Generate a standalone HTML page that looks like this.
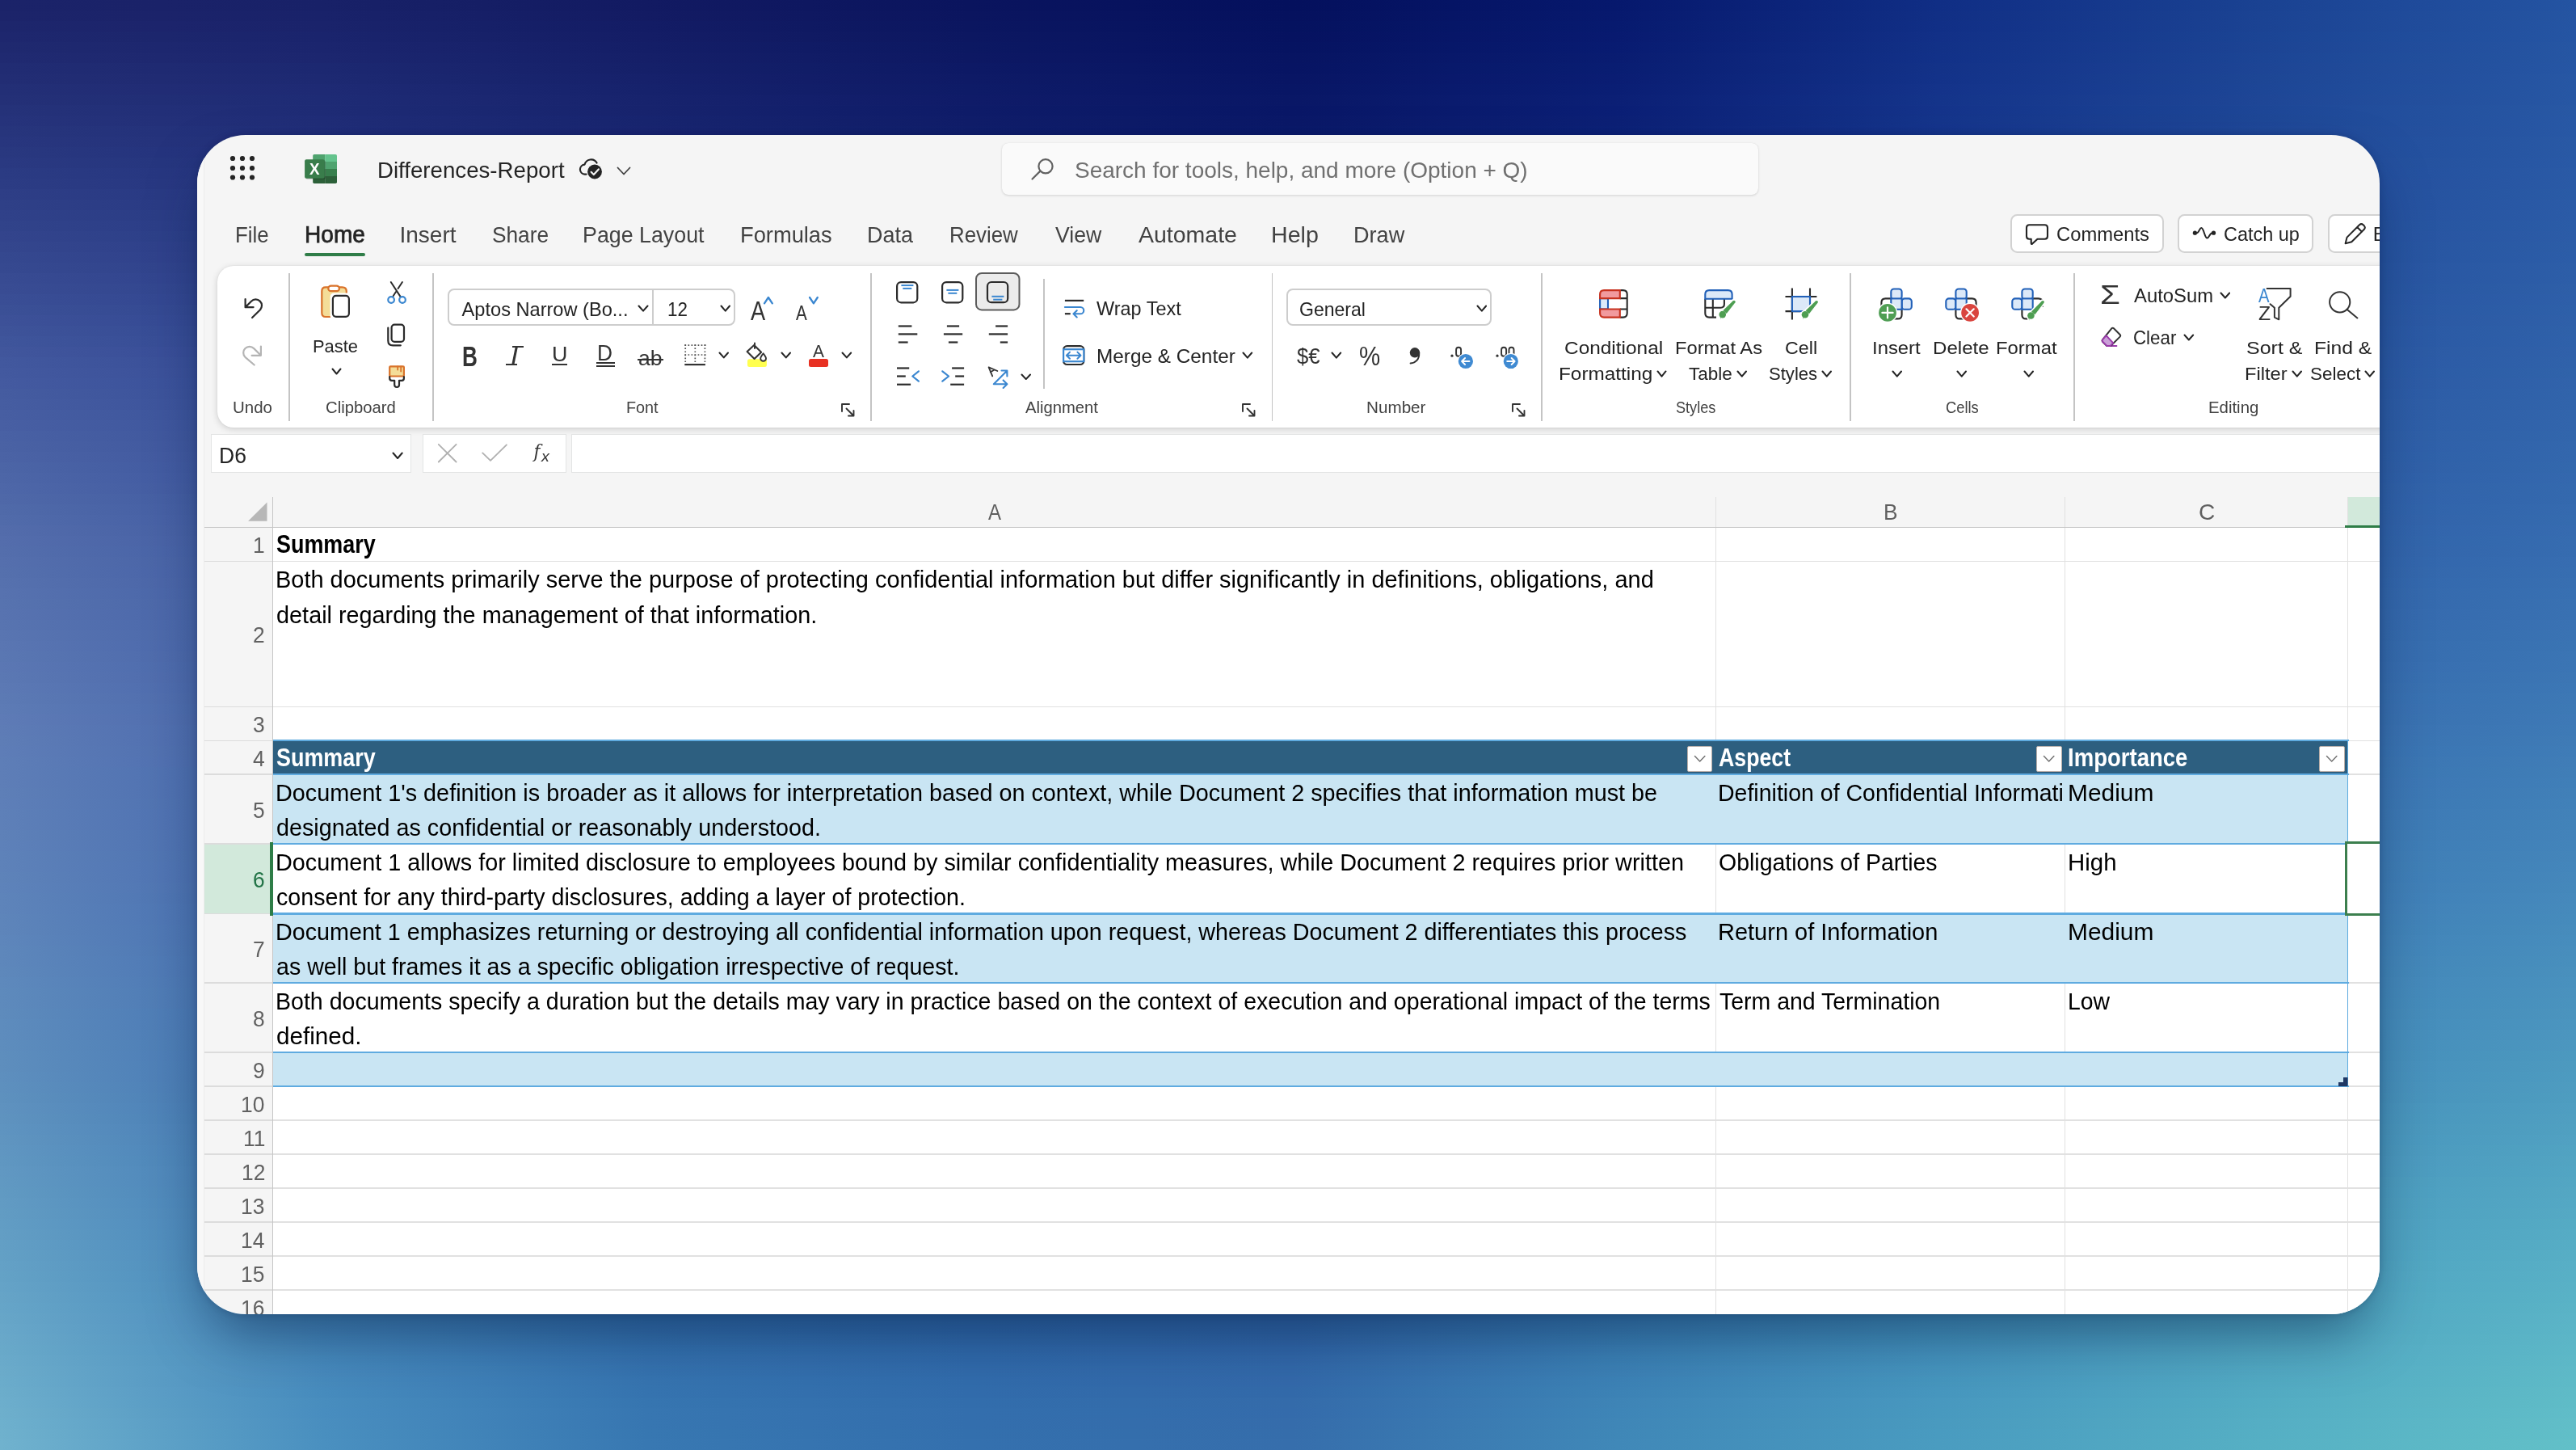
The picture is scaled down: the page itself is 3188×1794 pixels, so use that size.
<!DOCTYPE html>
<html><head><meta charset="utf-8"><title>Differences-Report</title>
<style>
html,body{margin:0;padding:0;}
body{width:3188px;height:1794px;overflow:hidden;position:relative;font-family:"Liberation Sans",sans-serif;background:#3a78b2;}
.a{position:absolute;box-sizing:border-box;}
.t{position:absolute;white-space:pre;line-height:1;transform-origin:0 0;}
#bg{position:absolute;left:0;top:0;width:3188px;height:1800px;background:#4a90c0;}
#w{position:absolute;left:244px;top:167px;width:2700.5px;height:1459px;border-radius:60px;background:#f5f5f5;overflow:hidden;}
#sh{position:absolute;left:244px;top:167px;width:2700.5px;height:1459px;border-radius:60px;box-shadow:0 34px 70px -14px rgba(0,24,60,0.50), 0 0 10px rgba(0,16,56,0.20);}
#c{position:absolute;left:-244px;top:-167px;width:3188px;height:1794px;will-change:transform;}
</style></head><body>
<div id="bg"><div style="height:13.000px;background:linear-gradient(90deg,#1b2369 0.00%,#1a2269 6.27%,#182168 12.55%,#151e65 18.82%,#121a62 25.09%,#0e1760 31.37%,#0a145e 37.64%,#07125e 43.91%,#04105d 50.19%,#051465 56.46%,#06186d 62.74%,#0b2379 69.01%,#102e85 75.28%,#15388c 81.56%,#1a4292 87.83%,#1f4b9b 94.10%,#2454a2 100.00%)"></div><div style="height:13.000px;background:linear-gradient(90deg,#1c246a 0.00%,#1b236a 6.27%,#19226a 12.55%,#161f67 18.82%,#131b63 25.09%,#0f1861 31.37%,#0b155f 37.64%,#08135f 43.91%,#05115e 50.19%,#061566 56.46%,#07196e 62.74%,#0c247a 69.01%,#112f85 75.28%,#16398c 81.56%,#1b4393 87.83%,#204c9b 94.10%,#2555a2 100.00%)"></div><div style="height:13.000px;background:linear-gradient(90deg,#1d266c 0.00%,#1c246c 6.27%,#1a236b 12.55%,#162068 18.82%,#131c65 25.09%,#0f1962 31.37%,#0b1660 37.64%,#081460 43.91%,#05125f 50.19%,#061667 56.46%,#071a6f 62.74%,#0c257a 69.01%,#112f86 75.28%,#16398d 81.56%,#1b4393 87.83%,#204c9b 94.10%,#2555a3 100.00%)"></div><div style="height:13.000px;background:linear-gradient(90deg,#1e276e 0.00%,#1c266d 6.27%,#1a246d 12.55%,#172169 18.82%,#141d66 25.09%,#101a63 31.37%,#0c1761 37.64%,#091561 43.91%,#061260 50.19%,#071668 56.46%,#081a70 62.74%,#0d257b 69.01%,#123087 75.28%,#163a8d 81.56%,#1b4494 87.83%,#204d9c 94.10%,#2555a3 100.00%)"></div><div style="height:13.000px;background:linear-gradient(90deg,#1f296f 0.00%,#1d276f 6.27%,#1b256e 12.55%,#18226b 18.82%,#141e67 25.09%,#101b65 31.37%,#0c1862 37.64%,#091562 43.91%,#061361 50.19%,#071769 56.46%,#081b71 62.74%,#0d267c 69.01%,#123187 75.28%,#173a8e 81.56%,#1c4494 87.83%,#214d9c 94.10%,#2656a3 100.00%)"></div><div style="height:13.000px;background:linear-gradient(90deg,#202a71 0.00%,#1e2870 6.27%,#1c266f 12.55%,#18236c 18.82%,#151f68 25.09%,#111c66 31.37%,#0d1863 37.64%,#0a1663 43.91%,#071462 50.19%,#08186a 56.46%,#091c71 62.74%,#0e277d 69.01%,#123188 75.28%,#173b8e 81.56%,#1c4595 87.83%,#214e9c 94.10%,#2656a3 100.00%)"></div><div style="height:13.000px;background:linear-gradient(90deg,#212c73 0.00%,#1f2a72 6.27%,#1c2871 12.55%,#19246d 18.82%,#152069 25.09%,#111d67 31.37%,#0d1965 37.64%,#0a1764 43.91%,#071463 50.19%,#08196b 56.46%,#091d72 62.74%,#0e277d 69.01%,#133288 75.28%,#183b8f 81.56%,#1d4595 87.83%,#224e9c 94.10%,#2656a4 100.00%)"></div><div style="height:13.000px;background:linear-gradient(90deg,#222d74 0.00%,#202b73 6.27%,#1d2972 12.55%,#19256e 18.82%,#16216b 25.09%,#121d68 31.37%,#0e1a66 37.64%,#0b1865 43.91%,#081564 50.19%,#09196c 56.46%,#0a1d73 62.74%,#0e287e 69.01%,#133289 75.28%,#183c8f 81.56%,#1d4695 87.83%,#224e9d 94.10%,#2757a4 100.00%)"></div><div style="height:13.000px;background:linear-gradient(90deg,#232f76 0.00%,#212c75 6.27%,#1e2a74 12.55%,#1a2670 18.82%,#16226c 25.09%,#121e69 31.37%,#0e1b67 37.64%,#0b1866 43.91%,#081665 50.19%,#091a6d 56.46%,#0a1e74 62.74%,#0f287f 69.01%,#14338a 75.28%,#183c90 81.56%,#1d4696 87.83%,#224f9d 94.10%,#2757a4 100.00%)"></div><div style="height:13.000px;background:linear-gradient(90deg,#243077 0.00%,#212e76 6.27%,#1e2b75 12.55%,#1b2771 18.82%,#17236d 25.09%,#131f6b 31.37%,#0f1b68 37.64%,#0c1967 43.91%,#091766 50.19%,#0a1b6e 56.46%,#0b1f75 62.74%,#0f2980 69.01%,#14348a 75.28%,#193d90 81.56%,#1e4696 87.83%,#234f9d 94.10%,#2757a4 100.00%)"></div><div style="height:13.000px;background:linear-gradient(90deg,#253279 0.00%,#222f78 6.27%,#1f2c76 12.55%,#1b2872 18.82%,#18246e 25.09%,#13206c 31.37%,#0f1c69 37.64%,#0c1a68 43.91%,#091767 50.19%,#0a1b6e 56.46%,#0b1f76 62.74%,#102a80 69.01%,#15348b 75.28%,#193e91 81.56%,#1e4797 87.83%,#23509e 94.10%,#2858a4 100.00%)"></div><div style="height:13.000px;background:linear-gradient(90deg,#26337b 0.00%,#233079 6.27%,#202d78 12.55%,#1c2974 18.82%,#182570 25.09%,#14216d 31.37%,#101d6a 37.64%,#0d1b69 43.91%,#0a1868 50.19%,#0b1c6f 56.46%,#0c2076 62.74%,#102a81 69.01%,#15358c 75.28%,#1a3e91 81.56%,#1e4797 87.83%,#23509e 94.10%,#2858a5 100.00%)"></div><div style="height:13.000px;background:linear-gradient(90deg,#27357c 0.00%,#24327b 6.27%,#202e79 12.55%,#1c2a75 18.82%,#192571 25.09%,#14226e 31.37%,#101e6b 37.64%,#0d1b6a 43.91%,#0a1969 50.19%,#0b1d70 56.46%,#0c2177 62.74%,#112b82 69.01%,#15358c 75.28%,#1a3f92 81.56%,#1f4898 87.83%,#24509e 94.10%,#2858a5 100.00%)"></div><div style="height:13.000px;background:linear-gradient(90deg,#28367e 0.00%,#25337c 6.27%,#21307b 12.55%,#1d2b76 18.82%,#192672 25.09%,#15236f 31.37%,#111f6c 37.64%,#0e1c6b 43.91%,#0b196a 50.19%,#0c1d71 56.46%,#0d2278 62.74%,#112c82 69.01%,#16368d 75.28%,#1b3f92 81.56%,#1f4898 87.83%,#24519f 94.10%,#2959a5 100.00%)"></div><div style="height:13.000px;background:linear-gradient(90deg,#29387f 0.00%,#25347e 6.27%,#22317c 12.55%,#1e2c78 18.82%,#1a2773 25.09%,#152370 31.37%,#111f6d 37.64%,#0e1d6c 43.91%,#0b1a6b 50.19%,#0c1e72 56.46%,#0d2279 62.74%,#122c83 69.01%,#16368d 75.28%,#1b4093 81.56%,#204998 87.83%,#24519f 94.10%,#2959a5 100.00%)"></div><div style="height:13.000px;background:linear-gradient(90deg,#2a3981 0.00%,#26367f 6.27%,#22327d 12.55%,#1e2d79 18.82%,#1a2875 25.09%,#162472 31.37%,#12206f 37.64%,#0f1d6d 43.91%,#0c1b6c 50.19%,#0d1f73 56.46%,#0e237a 62.74%,#122d84 69.01%,#17378e 75.28%,#1b4093 81.56%,#204999 87.83%,#25529f 94.10%,#2959a6 100.00%)"></div><div style="height:13.000px;background:linear-gradient(90deg,#2b3b83 0.00%,#273781 6.27%,#23337f 12.55%,#1f2e7a 18.82%,#1b2976 25.09%,#162573 31.37%,#122170 37.64%,#0f1e6e 43.91%,#0c1b6d 50.19%,#0d2074 56.46%,#0e247b 62.74%,#132e85 69.01%,#17388f 75.28%,#1c4194 81.56%,#204a99 87.83%,#2552a0 94.10%,#2a5aa6 100.00%)"></div><div style="height:13.000px;background:linear-gradient(90deg,#2c3c84 0.00%,#283882 6.27%,#243480 12.55%,#1f2f7c 18.82%,#1b2a77 25.09%,#172674 31.37%,#132271 37.64%,#101f70 43.91%,#0d1c6e 50.19%,#0e2075 56.46%,#0f247c 62.74%,#132e85 69.01%,#18388f 75.28%,#1c4194 81.56%,#214a9a 87.83%,#2652a0 94.10%,#2a5aa6 100.00%)"></div><div style="height:13.000px;background:linear-gradient(90deg,#2e3e86 0.00%,#293a84 6.27%,#253682 12.55%,#20307d 18.82%,#1c2b78 25.09%,#182775 31.37%,#132372 37.64%,#102071 43.91%,#0d1d6f 50.19%,#0e2176 56.46%,#0f257c 62.74%,#142f86 69.01%,#183990 75.28%,#1d4295 81.56%,#214b9a 87.83%,#2653a0 94.10%,#2a5ba6 100.00%)"></div><div style="height:13.000px;background:linear-gradient(90deg,#2f4087 0.00%,#2a3b85 6.27%,#263783 12.55%,#21317e 18.82%,#1d2c79 25.09%,#182876 31.37%,#142473 37.64%,#112171 43.91%,#0e1e70 50.19%,#0f2277 56.46%,#10267d 62.74%,#143087 69.01%,#193a90 75.28%,#1d4395 81.56%,#224b9b 87.83%,#2653a1 94.10%,#2b5ba7 100.00%)"></div><div style="height:13.000px;background:linear-gradient(90deg,#304189 0.00%,#2b3d86 6.27%,#273884 12.55%,#22337f 18.82%,#1d2d7a 25.09%,#192977 31.37%,#152574 37.64%,#122272 43.91%,#0f1f71 50.19%,#102377 56.46%,#10277e 62.74%,#153187 69.01%,#193a91 75.28%,#1e4396 81.56%,#224c9b 87.83%,#2754a1 94.10%,#2b5ba7 100.00%)"></div><div style="height:13.000px;background:linear-gradient(90deg,#31438a 0.00%,#2c3e88 6.27%,#273985 12.55%,#233481 18.82%,#1e2e7c 25.09%,#1a2a78 31.37%,#152575 37.64%,#122273 43.91%,#0f1f72 50.19%,#102478 56.46%,#11287f 62.74%,#153188 69.01%,#1a3b92 75.28%,#1e4496 81.56%,#234d9b 87.83%,#2755a1 94.10%,#2b5ca7 100.00%)"></div><div style="height:13.000px;background:linear-gradient(90deg,#33448c 0.00%,#2d4089 6.27%,#283b87 12.55%,#243582 18.82%,#1f2f7d 25.09%,#1a2b79 31.37%,#162676 37.64%,#132374 43.91%,#102073 50.19%,#112479 56.46%,#122980 62.74%,#163289 69.01%,#1a3c92 75.28%,#1f4497 81.56%,#234d9c 87.83%,#2855a2 94.10%,#2c5ca7 100.00%)"></div><div style="height:13.000px;background:linear-gradient(90deg,#34468d 0.00%,#2f418b 6.27%,#293c88 12.55%,#243683 18.82%,#20307e 25.09%,#1b2c7a 31.37%,#172777 37.64%,#142475 43.91%,#102174 50.19%,#11257a 56.46%,#122980 62.74%,#16338a 69.01%,#1b3c93 75.28%,#1f4598 81.56%,#234e9c 87.83%,#2856a2 94.10%,#2c5da7 100.00%)"></div><div style="height:13.000px;background:linear-gradient(90deg,#35488f 0.00%,#30428c 6.27%,#2a3d89 12.55%,#253784 18.82%,#20317f 25.09%,#1c2d7c 31.37%,#172878 37.64%,#142576 43.91%,#112275 50.19%,#12267b 56.46%,#132a81 62.74%,#17348a 69.01%,#1b3d93 75.28%,#1f4698 81.56%,#244e9d 87.83%,#2856a2 94.10%,#2c5da8 100.00%)"></div><div style="height:13.000px;background:linear-gradient(90deg,#364990 0.00%,#31448d 6.27%,#2b3e8b 12.55%,#263885 18.82%,#213280 25.09%,#1d2e7d 31.37%,#182979 37.64%,#152677 43.91%,#122376 50.19%,#13277c 56.46%,#132b82 62.74%,#18348b 69.01%,#1c3e94 75.28%,#204699 81.56%,#244f9d 87.83%,#2957a3 94.10%,#2d5ea8 100.00%)"></div><div style="height:13.000px;background:linear-gradient(90deg,#384b92 0.00%,#32458f 6.27%,#2c408c 12.55%,#273a87 18.82%,#223381 25.09%,#1d2f7e 31.37%,#192a7a 37.64%,#162778 43.91%,#122377 50.19%,#13287d 56.46%,#142c83 62.74%,#18358c 69.01%,#1c3e95 75.28%,#204799 81.56%,#25509d 87.83%,#2957a3 94.10%,#2d5ea8 100.00%)"></div><div style="height:13.000px;background:linear-gradient(90deg,#394c93 0.00%,#334790 6.27%,#2d418d 12.55%,#283b88 18.82%,#233482 25.09%,#1e307f 31.37%,#192b7b 37.64%,#162879 43.91%,#132478 50.19%,#14287e 56.46%,#152d84 62.74%,#19368c 69.01%,#1d3f95 75.28%,#21489a 81.56%,#25509e 87.83%,#2958a3 94.10%,#2e5fa8 100.00%)"></div><div style="height:13.000px;background:linear-gradient(90deg,#3a4e95 0.00%,#344892 6.27%,#2e428f 12.55%,#293c89 18.82%,#233584 25.09%,#1f3180 31.37%,#1a2c7c 37.64%,#17287a 43.91%,#142579 50.19%,#14297e 56.46%,#152e84 62.74%,#19378d 69.01%,#1d4096 75.28%,#21489a 81.56%,#25519e 87.83%,#2a58a4 94.10%,#2e5fa9 100.00%)"></div><div style="height:13.000px;background:linear-gradient(90deg,#3b5096 0.00%,#354a93 6.27%,#2f4490 12.55%,#293d8a 18.82%,#243685 25.09%,#1f3281 31.37%,#1b2d7d 37.64%,#18297b 43.91%,#142679 50.19%,#152a7f 56.46%,#162e85 62.74%,#1a378e 69.01%,#1e4196 75.28%,#22499b 81.56%,#26519f 87.83%,#2a59a4 94.10%,#2e60a9 100.00%)"></div><div style="height:13.000px;background:linear-gradient(90deg,#3d5198 0.00%,#364b95 6.27%,#304591 12.55%,#2a3e8c 18.82%,#253786 25.09%,#203382 31.37%,#1b2e7e 37.64%,#182a7c 43.91%,#15277a 50.19%,#162b80 56.46%,#162f86 62.74%,#1a388e 69.01%,#1e4197 75.28%,#224a9b 81.56%,#26529f 87.83%,#2b59a4 94.10%,#2f60a9 100.00%)"></div><div style="height:13.000px;background:linear-gradient(90deg,#3e5399 0.00%,#374d96 6.27%,#314692 12.55%,#2b3f8d 18.82%,#263887 25.09%,#213383 31.37%,#1c2e7f 37.64%,#192b7d 43.91%,#16277b 50.19%,#162c81 56.46%,#173087 62.74%,#1b398f 69.01%,#1f4297 75.28%,#234a9c 81.56%,#2752a0 87.83%,#2b5aa5 94.10%,#2f61a9 100.00%)"></div><div style="height:13.000px;background:linear-gradient(90deg,#3f559b 0.00%,#384e97 6.27%,#324794 12.55%,#2c408e 18.82%,#263a88 25.09%,#223484 31.37%,#1d2f80 37.64%,#1a2c7e 43.91%,#16287c 50.19%,#172d82 56.46%,#183188 62.74%,#1b3a90 69.01%,#1f4398 75.28%,#234b9c 81.56%,#2753a0 87.83%,#2b5aa5 94.10%,#2f61aa 100.00%)"></div><div style="height:13.000px;background:linear-gradient(90deg,#41569c 0.00%,#3a4f99 6.27%,#334995 12.55%,#2d428f 18.82%,#273b89 25.09%,#223585 31.37%,#1d3081 37.64%,#1a2d7f 43.91%,#17297d 50.19%,#182d83 56.46%,#183288 62.74%,#1c3b90 69.01%,#204399 75.28%,#244b9d 81.56%,#2854a0 87.83%,#2c5ba5 94.10%,#3061aa 100.00%)"></div><div style="height:13.000px;background:linear-gradient(90deg,#42589e 0.00%,#3b519a 6.27%,#334a96 12.55%,#2e4390 18.82%,#283c8a 25.09%,#233686 31.37%,#1e3183 37.64%,#1b2e80 43.91%,#172a7e 50.19%,#182e84 56.46%,#193289 62.74%,#1d3b91 69.01%,#204499 75.28%,#244c9d 81.56%,#2854a1 87.83%,#2c5ba6 94.10%,#3062aa 100.00%)"></div><div style="height:13.000px;background:linear-gradient(90deg,#43599f 0.00%,#3c529b 6.27%,#344b97 12.55%,#2e4491 18.82%,#283c8b 25.09%,#243787 31.37%,#1f3283 37.64%,#1b2e81 43.91%,#182b7f 50.19%,#192f84 56.46%,#19338a 62.74%,#1d3c92 69.01%,#21459a 75.28%,#254d9d 81.56%,#2855a1 87.83%,#2c5ca6 94.10%,#3063aa 100.00%)"></div><div style="height:13.000px;background:linear-gradient(90deg,#445aa0 0.00%,#3c539c 6.27%,#354c98 12.55%,#2f4592 18.82%,#293d8c 25.09%,#243888 31.37%,#1f3384 37.64%,#1c2f82 43.91%,#192b7f 50.19%,#193085 56.46%,#1a348a 62.74%,#1d3d92 69.01%,#21459a 75.28%,#254d9e 81.56%,#2955a2 87.83%,#2d5ca6 94.10%,#3163ab 100.00%)"></div><div style="height:13.000px;background:linear-gradient(90deg,#455ca0 0.00%,#3d549c 6.27%,#364d99 12.55%,#304593 18.82%,#2a3e8c 25.09%,#253989 31.37%,#203385 37.64%,#1c3082 43.91%,#192c80 50.19%,#1a3086 56.46%,#1a358b 62.74%,#1e3d93 69.01%,#22469b 75.28%,#254e9e 81.56%,#2956a2 87.83%,#2d5da7 94.10%,#3164ab 100.00%)"></div><div style="height:13.000px;background:linear-gradient(90deg,#465da1 0.00%,#3e559d 6.27%,#364e99 12.55%,#304693 18.82%,#2a3f8d 25.09%,#253989 31.37%,#203485 37.64%,#1d3083 43.91%,#1a2d81 50.19%,#1a3186 56.46%,#1b368c 62.74%,#1e3e93 69.01%,#22479b 75.28%,#264f9f 81.56%,#2a57a3 87.83%,#2e5ea7 94.10%,#3164ab 100.00%)"></div><div style="height:13.000px;background:linear-gradient(90deg,#475ea2 0.00%,#3f579e 6.27%,#374f9a 12.55%,#314794 18.82%,#2b408e 25.09%,#263a8a 31.37%,#213586 37.64%,#1d3184 43.91%,#1a2d81 50.19%,#1b3287 56.46%,#1b368c 62.74%,#1f3f94 69.01%,#22489c 75.28%,#264f9f 81.56%,#2a57a3 87.83%,#2e5ea7 94.10%,#3265ac 100.00%)"></div><div style="height:13.000px;background:linear-gradient(90deg,#485fa3 0.00%,#40589f 6.27%,#38509b 12.55%,#324895 18.82%,#2b408e 25.09%,#263b8a 31.37%,#213687 37.64%,#1e3284 43.91%,#1b2e82 50.19%,#1b3387 56.46%,#1c378d 62.74%,#1f4095 69.01%,#23489c 75.28%,#2750a0 81.56%,#2a58a3 87.83%,#2e5fa8 94.10%,#3265ac 100.00%)"></div><div style="height:13.000px;background:linear-gradient(90deg,#4961a4 0.00%,#41599f 6.27%,#39519b 12.55%,#324995 18.82%,#2c418f 25.09%,#273c8b 31.37%,#223687 37.64%,#1f3385 43.91%,#1b2f83 50.19%,#1c3388 56.46%,#1c388d 62.74%,#204095 69.01%,#23499d 75.28%,#2751a0 81.56%,#2b59a4 87.83%,#2f60a8 94.10%,#3266ac 100.00%)"></div><div style="height:13.000px;background:linear-gradient(90deg,#4a62a4 0.00%,#425aa0 6.27%,#39529c 12.55%,#334a96 18.82%,#2c4290 25.09%,#273d8c 31.37%,#223788 37.64%,#1f3386 43.91%,#1c2f83 50.19%,#1c3489 56.46%,#1d398e 62.74%,#204196 69.01%,#244a9d 75.28%,#2752a1 81.56%,#2b59a4 87.83%,#2f60a9 94.10%,#3367ad 100.00%)"></div><div style="height:13.000px;background:linear-gradient(90deg,#4b63a5 0.00%,#435ba1 6.27%,#3a539d 12.55%,#334b97 18.82%,#2d4390 25.09%,#283d8c 31.37%,#233888 37.64%,#203486 43.91%,#1c3084 50.19%,#1d3589 56.46%,#1d398f 62.74%,#214296 69.01%,#244a9e 75.28%,#2852a1 81.56%,#2c5aa5 87.83%,#2f61a9 94.10%,#3367ad 100.00%)"></div><div style="height:13.000px;background:linear-gradient(90deg,#4c65a6 0.00%,#435ca2 6.27%,#3b549e 12.55%,#344c97 18.82%,#2d4491 25.09%,#283e8d 31.37%,#233989 37.64%,#203587 43.91%,#1d3185 50.19%,#1d358a 56.46%,#1e3a8f 62.74%,#214397 69.01%,#254b9e 75.28%,#2853a2 81.56%,#2c5ba5 87.83%,#3061a9 94.10%,#3368ad 100.00%)"></div><div style="height:13.000px;background:linear-gradient(90deg,#4d66a7 0.00%,#445da3 6.27%,#3b559e 12.55%,#354d98 18.82%,#2e4492 25.09%,#293f8e 31.37%,#24398a 37.64%,#213587 43.91%,#1d3185 50.19%,#1e368b 56.46%,#1f3b90 62.74%,#224397 69.01%,#254c9f 75.28%,#2954a2 81.56%,#2c5ba6 87.83%,#3062aa 94.10%,#3468ae 100.00%)"></div><div style="height:13.000px;background:linear-gradient(90deg,#4e67a8 0.00%,#455ea3 6.27%,#3c569f 12.55%,#354d99 18.82%,#2f4592 25.09%,#2a408e 31.37%,#253a8a 37.64%,#213688 43.91%,#1e3286 50.19%,#1e378b 56.46%,#1f3c91 62.74%,#224498 69.01%,#264c9f 75.28%,#2954a3 81.56%,#2d5ca6 87.83%,#3163aa 94.10%,#3469ae 100.00%)"></div><div style="height:13.000px;background:linear-gradient(90deg,#4f68a8 0.00%,#4660a4 6.27%,#3d57a0 12.55%,#364e99 18.82%,#2f4693 25.09%,#2a408f 31.37%,#253b8b 37.64%,#223789 43.91%,#1e3386 50.19%,#1f388c 56.46%,#203c91 62.74%,#234598 69.01%,#264da0 75.28%,#2a55a3 81.56%,#2d5da6 87.83%,#3163ab 94.10%,#3469ae 100.00%)"></div><div style="height:13.000px;background:linear-gradient(90deg,#506aa9 0.00%,#4761a5 6.27%,#3e58a0 12.55%,#374f9a 18.82%,#304794 25.09%,#2b4190 31.37%,#263b8c 37.64%,#223789 43.91%,#1f3487 50.19%,#1f388c 56.46%,#203d92 62.74%,#234699 69.01%,#264ea0 75.28%,#2a56a4 81.56%,#2e5da7 87.83%,#3164ab 94.10%,#356aaf 100.00%)"></div><div style="height:13.000px;background:linear-gradient(90deg,#516baa 0.00%,#4862a6 6.27%,#3e59a1 12.55%,#37509b 18.82%,#304894 25.09%,#2b4290 31.37%,#263c8c 37.64%,#23388a 43.91%,#1f3488 50.19%,#20398d 56.46%,#213e92 62.74%,#24469a 69.01%,#274fa1 75.28%,#2a56a4 81.56%,#2e5ea7 87.83%,#3264ab 94.10%,#356baf 100.00%)"></div><div style="height:13.000px;background:linear-gradient(90deg,#536cab 0.00%,#4963a6 6.27%,#3f5aa2 12.55%,#38519b 18.82%,#314895 25.09%,#2c4391 31.37%,#273d8d 37.64%,#23398b 43.91%,#203588 50.19%,#203a8e 56.46%,#213f93 62.74%,#24479a 69.01%,#274fa1 75.28%,#2b57a4 81.56%,#2e5fa8 87.83%,#3265ac 94.10%,#366bb0 100.00%)"></div><div style="height:13.000px;background:linear-gradient(90deg,#546dac 0.00%,#4a64a7 6.27%,#405ba3 12.55%,#39529c 18.82%,#314996 25.09%,#2c4392 31.37%,#273e8e 37.64%,#243a8b 43.91%,#203689 50.19%,#213b8e 56.46%,#224094 62.74%,#25489b 69.01%,#2850a2 75.28%,#2b58a5 81.56%,#2f5fa8 87.83%,#3266ac 94.10%,#366cb0 100.00%)"></div><div style="height:13.000px;background:linear-gradient(90deg,#546eac 0.00%,#4a65a8 6.27%,#405ba3 12.55%,#39539d 18.82%,#324a96 25.09%,#2d4492 31.37%,#283e8e 37.64%,#243a8c 43.91%,#21368a 50.19%,#213b8f 56.46%,#224094 62.74%,#25489b 69.01%,#2851a2 75.28%,#2c58a5 81.56%,#2f60a9 87.83%,#3366ac 94.10%,#366cb0 100.00%)"></div><div style="height:13.000px;background:linear-gradient(90deg,#556fad 0.00%,#4b66a8 6.27%,#415ca4 12.55%,#39539d 18.82%,#324a97 25.09%,#2d4593 31.37%,#283f8f 37.64%,#253b8c 43.91%,#21378a 50.19%,#223c8f 56.46%,#224195 62.74%,#26499c 69.01%,#2951a3 75.28%,#2c59a6 81.56%,#3061a9 87.83%,#3367ad 94.10%,#376db1 100.00%)"></div><div style="height:13.000px;background:linear-gradient(90deg,#5570ad 0.00%,#4b66a9 6.27%,#415da4 12.55%,#3a549e 18.82%,#324b97 25.09%,#2d4593 31.37%,#283f8f 37.64%,#253b8d 43.91%,#22378b 50.19%,#223d90 56.46%,#234295 62.74%,#264a9c 69.01%,#2952a3 75.28%,#2d5aa6 81.56%,#3061a9 87.83%,#3468ad 94.10%,#376eb1 100.00%)"></div><div style="height:13.000px;background:linear-gradient(90deg,#5671ae 0.00%,#4c67a9 6.27%,#415da5 12.55%,#3a549e 18.82%,#334b98 25.09%,#2e4694 31.37%,#284090 37.64%,#253c8e 43.91%,#22388b 50.19%,#233d91 56.46%,#234296 62.74%,#264b9d 69.01%,#2a53a4 75.28%,#2d5ba7 81.56%,#3162aa 87.83%,#3469ae 94.10%,#386fb1 100.00%)"></div><div style="height:13.000px;background:linear-gradient(90deg,#5772af 0.00%,#4c68aa 6.27%,#425ea5 12.55%,#3a559f 18.82%,#334c98 25.09%,#2e4694 31.37%,#294090 37.64%,#253c8e 43.91%,#22398c 50.19%,#233e91 56.46%,#244396 62.74%,#274b9d 69.01%,#2a54a4 75.28%,#2d5ba7 81.56%,#3163aa 87.83%,#356aae 94.10%,#3870b2 100.00%)"></div><div style="height:13.000px;background:linear-gradient(90deg,#5773af 0.00%,#4d69aa 6.27%,#425fa6 12.55%,#3a559f 18.82%,#334c99 25.09%,#2e4795 31.37%,#294191 37.64%,#263d8f 43.91%,#23398c 50.19%,#233f92 56.46%,#244497 62.74%,#274c9e 69.01%,#2a54a4 75.28%,#2e5ca8 81.56%,#3164ab 87.83%,#356aae 94.10%,#3971b2 100.00%)"></div><div style="height:13.000px;background:linear-gradient(90deg,#5873b0 0.00%,#4d69ab 6.27%,#425fa6 12.55%,#3b56a0 18.82%,#334d99 25.09%,#2e4795 31.37%,#294191 37.64%,#263e8f 43.91%,#233a8d 50.19%,#243f92 56.46%,#254597 62.74%,#284d9e 69.01%,#2b55a5 75.28%,#2e5da8 81.56%,#3265ab 87.83%,#366baf 94.10%,#3971b2 100.00%)"></div><div style="height:13.000px;background:linear-gradient(90deg,#5874b0 0.00%,#4d6aac 6.27%,#4360a7 12.55%,#3b57a0 18.82%,#344d9a 25.09%,#2f4896 31.37%,#2a4292 37.64%,#263e90 43.91%,#233a8d 50.19%,#244093 56.46%,#254598 62.74%,#284e9f 69.01%,#2b56a5 75.28%,#2f5ea8 81.56%,#3265ab 87.83%,#366caf 94.10%,#3a72b3 100.00%)"></div><div style="height:13.000px;background:linear-gradient(90deg,#5975b1 0.00%,#4e6bac 6.27%,#4360a7 12.55%,#3b57a1 18.82%,#344e9a 25.09%,#2f4896 31.37%,#2a4392 37.64%,#273f90 43.91%,#243b8e 50.19%,#244193 56.46%,#254698 62.74%,#284e9f 69.01%,#2c57a6 75.28%,#2f5ea9 81.56%,#3366ac 87.83%,#366daf 94.10%,#3a73b3 100.00%)"></div><div style="height:13.000px;background:linear-gradient(90deg,#5a76b2 0.00%,#4e6bad 6.27%,#4361a8 12.55%,#3c58a1 18.82%,#344e9b 25.09%,#2f4997 31.37%,#2a4393 37.64%,#273f91 43.91%,#243b8e 50.19%,#254194 56.46%,#264799 62.74%,#294fa0 69.01%,#2c58a6 75.28%,#305fa9 81.56%,#3367ac 87.83%,#376eb0 94.10%,#3a74b3 100.00%)"></div><div style="height:13.000px;background:linear-gradient(90deg,#5a77b2 0.00%,#4f6cad 6.27%,#4462a8 12.55%,#3c58a2 18.82%,#344f9b 25.09%,#2f4997 31.37%,#2a4493 37.64%,#274091 43.91%,#243c8f 50.19%,#254294 56.46%,#26489a 62.74%,#2950a0 69.01%,#2c58a7 75.28%,#3060aa 81.56%,#3468ad 87.83%,#376eb0 94.10%,#3b75b4 100.00%)"></div><div style="height:13.000px;background:linear-gradient(90deg,#5b77b3 0.00%,#4f6dae 6.27%,#4462a9 12.55%,#3c59a2 18.82%,#354f9b 25.09%,#304a98 31.37%,#2b4494 37.64%,#284092 43.91%,#253d8f 50.19%,#264295 56.46%,#27489a 62.74%,#2a51a1 69.01%,#2d59a7 75.28%,#3061aa 81.56%,#3469ad 87.83%,#386fb1 94.10%,#3b75b4 100.00%)"></div><div style="height:13.000px;background:linear-gradient(90deg,#5b78b3 0.00%,#506dae 6.27%,#4463a9 12.55%,#3d59a3 18.82%,#35509c 25.09%,#304a98 31.37%,#2b4594 37.64%,#284192 43.91%,#253d90 50.19%,#264395 56.46%,#27499b 62.74%,#2a51a1 69.01%,#2d5aa8 75.28%,#3162aa 81.56%,#3469ad 87.83%,#3870b1 94.10%,#3c76b4 100.00%)"></div><div style="height:13.000px;background:linear-gradient(90deg,#5c79b4 0.00%,#506eaf 6.27%,#4563aa 12.55%,#3d5aa3 18.82%,#35509c 25.09%,#304b99 31.37%,#2b4595 37.64%,#284193 43.91%,#253e90 50.19%,#264496 56.46%,#274a9b 62.74%,#2b52a2 69.01%,#2e5ba8 75.28%,#3162ab 81.56%,#356aae 87.83%,#3971b1 94.10%,#3c77b5 100.00%)"></div><div style="height:13.000px;background:linear-gradient(90deg,#5c7ab4 0.00%,#516faf 6.27%,#4564aa 12.55%,#3d5ba4 18.82%,#35519d 25.09%,#304b99 31.37%,#2c4695 37.64%,#294293 43.91%,#263e91 50.19%,#274496 56.46%,#284b9c 62.74%,#2b53a2 69.01%,#2e5ba8 75.28%,#3263ab 81.56%,#356bae 87.83%,#3972b2 94.10%,#3d78b5 100.00%)"></div><div style="height:13.000px;background:linear-gradient(90deg,#5d7bb5 0.00%,#5170b0 6.27%,#4565ab 12.55%,#3d5ba4 18.82%,#36529d 25.09%,#314c9a 31.37%,#2c4696 37.64%,#294394 43.91%,#263f92 50.19%,#274597 56.46%,#284b9c 62.74%,#2b54a3 69.01%,#2f5ca9 75.28%,#3264ac 81.56%,#366caf 87.83%,#3a72b2 94.10%,#3d79b5 100.00%)"></div><div style="height:13.000px;background:linear-gradient(90deg,#5e7bb6 0.00%,#5270b0 6.27%,#4665ab 12.55%,#3e5ca5 18.82%,#36529e 25.09%,#314c9a 31.37%,#2c4796 37.64%,#294394 43.91%,#263f92 50.19%,#284697 56.46%,#294c9d 62.74%,#2c54a3 69.01%,#2f5da9 75.28%,#3365ac 81.56%,#366daf 87.83%,#3a73b2 94.10%,#3e79b6 100.00%)"></div><div style="height:13.000px;background:linear-gradient(90deg,#5e7cb6 0.00%,#5271b1 6.27%,#4666ac 12.55%,#3e5ca5 18.82%,#36529e 25.09%,#314d9b 31.37%,#2c4797 37.64%,#294495 43.91%,#274093 50.19%,#284698 56.46%,#294d9d 62.74%,#2c55a3 69.01%,#2f5eaa 75.28%,#3365ad 81.56%,#376daf 87.83%,#3b74b3 94.10%,#3e7ab6 100.00%)"></div><div style="height:13.000px;background:linear-gradient(90deg,#5e7db6 0.00%,#5271b1 6.27%,#4666ac 12.55%,#3e5ca5 18.82%,#36539e 25.09%,#314d9b 31.37%,#2c4897 37.64%,#294495 43.91%,#274093 50.19%,#284798 56.46%,#294e9e 62.74%,#2c56a4 69.01%,#305eaa 75.28%,#3366ad 81.56%,#376eb0 87.83%,#3b75b3 94.10%,#3f7bb6 100.00%)"></div><div style="height:13.000px;background:linear-gradient(90deg,#5e7db7 0.00%,#5272b1 6.27%,#4566ac 12.55%,#3d5da5 18.82%,#36539f 25.09%,#314d9b 31.37%,#2c4898 37.64%,#294495 43.91%,#274193 50.19%,#284899 56.46%,#294e9e 62.74%,#2d57a4 69.01%,#305faa 75.28%,#3467ad 81.56%,#376fb0 87.83%,#3b76b4 94.10%,#3f7cb7 100.00%)"></div><div style="height:13.000px;background:linear-gradient(90deg,#5e7eb7 0.00%,#5272b2 6.27%,#4567ac 12.55%,#3d5da6 18.82%,#35539f 25.09%,#314e9b 31.37%,#2c4898 37.64%,#294596 43.91%,#274194 50.19%,#284899 56.46%,#2a4f9e 62.74%,#2d57a5 69.01%,#3060ab 75.28%,#3468ae 81.56%,#3870b0 87.83%,#3c77b4 94.10%,#407db7 100.00%)"></div><div style="height:13.000px;background:linear-gradient(90deg,#5e7eb7 0.00%,#5173b2 6.27%,#4567ac 12.55%,#3d5da6 18.82%,#35549f 25.09%,#314e9c 31.37%,#2c4998 37.64%,#294596 43.91%,#274294 50.19%,#284999 56.46%,#2a509f 62.74%,#2d58a5 69.01%,#3061ab 75.28%,#3469ae 81.56%,#3871b1 87.83%,#3c78b4 94.10%,#407eb7 100.00%)"></div><div style="height:13.000px;background:linear-gradient(90deg,#5e7eb7 0.00%,#5173b2 6.27%,#4567ad 12.55%,#3d5ea6 18.82%,#35549f 25.09%,#314e9c 31.37%,#2c4998 37.64%,#294696 43.91%,#274294 50.19%,#29499a 56.46%,#2a509f 62.74%,#2d59a5 69.01%,#3161ac 75.28%,#356aae 81.56%,#3972b1 87.83%,#3d78b5 94.10%,#407fb8 100.00%)"></div><div style="height:13.000px;background:linear-gradient(90deg,#5e7fb7 0.00%,#5173b2 6.27%,#4568ad 12.55%,#3d5ea6 18.82%,#3554a0 25.09%,#304f9c 31.37%,#2c4999 37.64%,#294697 43.91%,#274395 50.19%,#294a9a 56.46%,#2a51a0 62.74%,#2e5aa6 69.01%,#3162ac 75.28%,#356aaf 81.56%,#3972b2 87.83%,#3d79b5 94.10%,#4180b8 100.00%)"></div><div style="height:13.000px;background:linear-gradient(90deg,#5e7fb8 0.00%,#5174b2 6.27%,#4468ad 12.55%,#3d5ea6 18.82%,#3554a0 25.09%,#304f9c 31.37%,#2c4a99 37.64%,#294697 43.91%,#274395 50.19%,#294a9b 56.46%,#2a52a0 62.74%,#2e5aa6 69.01%,#3163ac 75.28%,#356baf 81.56%,#3973b2 87.83%,#3d7ab5 94.10%,#4181b9 100.00%)"></div><div style="height:13.000px;background:linear-gradient(90deg,#5e80b8 0.00%,#5174b3 6.27%,#4468ad 12.55%,#3c5fa7 18.82%,#3555a0 25.09%,#304f9d 31.37%,#2c4a99 37.64%,#294797 43.91%,#274495 50.19%,#294b9b 56.46%,#2b52a0 62.74%,#2e5ba7 69.01%,#3264ad 75.28%,#366caf 81.56%,#3a74b2 87.83%,#3e7bb6 94.10%,#4282b9 100.00%)"></div><div style="height:13.000px;background:linear-gradient(90deg,#5e80b8 0.00%,#5174b3 6.27%,#4469ad 12.55%,#3c5fa7 18.82%,#3455a0 25.09%,#30509d 31.37%,#2c4a9a 37.64%,#294798 43.91%,#274496 50.19%,#294c9b 56.46%,#2b53a1 62.74%,#2e5ca7 69.01%,#3264ad 75.28%,#366db0 81.56%,#3a75b3 87.83%,#3e7cb6 94.10%,#4283b9 100.00%)"></div><div style="height:13.000px;background:linear-gradient(90deg,#5e81b8 0.00%,#5175b3 6.27%,#4469ae 12.55%,#3c5fa7 18.82%,#3455a0 25.09%,#30509d 31.37%,#2c4b9a 37.64%,#294898 43.91%,#274596 50.19%,#294c9c 56.46%,#2b54a1 62.74%,#2f5ca7 69.01%,#3265ad 75.28%,#366eb0 81.56%,#3a76b3 87.83%,#3f7db6 94.10%,#4383ba 100.00%)"></div><div style="height:13.000px;background:linear-gradient(90deg,#5e81b9 0.00%,#5175b3 6.27%,#4469ae 12.55%,#3c5fa7 18.82%,#3456a1 25.09%,#30509d 31.37%,#2b4b9a 37.64%,#294898 43.91%,#274596 50.19%,#294d9c 56.46%,#2b54a2 62.74%,#2f5da8 69.01%,#3266ae 75.28%,#376eb1 81.56%,#3b77b3 87.83%,#3f7eb7 94.10%,#4384ba 100.00%)"></div><div style="height:13.000px;background:linear-gradient(90deg,#5e82b9 0.00%,#5176b3 6.27%,#446aae 12.55%,#3c60a8 18.82%,#3456a1 25.09%,#30519e 31.37%,#2b4c9a 37.64%,#294999 43.91%,#274697 50.19%,#294d9c 56.46%,#2b55a2 62.74%,#2f5ea8 69.01%,#3367ae 75.28%,#376fb1 81.56%,#3b78b4 87.83%,#407fb7 94.10%,#4485ba 100.00%)"></div><div style="height:13.000px;background:linear-gradient(90deg,#5e82b9 0.00%,#5176b4 6.27%,#436aae 12.55%,#3c60a8 18.82%,#3456a1 25.09%,#2f519e 31.37%,#2b4c9b 37.64%,#294999 43.91%,#274697 50.19%,#2a4e9d 56.46%,#2c56a2 62.74%,#2f5fa8 69.01%,#3367ae 75.28%,#3770b1 81.56%,#3c78b4 87.83%,#4080b7 94.10%,#4486bb 100.00%)"></div><div style="height:13.000px;background:linear-gradient(90deg,#5e83b9 0.00%,#5176b4 6.27%,#436aaf 12.55%,#3b60a8 18.82%,#3356a1 25.09%,#2f519e 31.37%,#2b4c9b 37.64%,#294999 43.91%,#284698 50.19%,#2a4e9d 56.46%,#2c56a3 62.74%,#305fa9 69.01%,#3368af 75.28%,#3871b2 81.56%,#3c79b4 87.83%,#4080b8 94.10%,#4587bb 100.00%)"></div><div style="height:13.000px;background:linear-gradient(90deg,#5e83ba 0.00%,#5177b4 6.27%,#436baf 12.55%,#3b61a8 18.82%,#3357a2 25.09%,#2f529e 31.37%,#2b4d9b 37.64%,#294a9a 43.91%,#284798 50.19%,#2a4f9e 56.46%,#2c57a3 62.74%,#3060a9 69.01%,#3469af 75.28%,#3872b2 81.56%,#3c7ab5 87.83%,#4181b8 94.10%,#4588bb 100.00%)"></div><div style="height:13.000px;background:linear-gradient(90deg,#5e84ba 0.00%,#5077b4 6.27%,#436baf 12.55%,#3b61a8 18.82%,#3357a2 25.09%,#2f529f 31.37%,#2b4d9c 37.64%,#294a9a 43.91%,#284798 50.19%,#2a509e 56.46%,#2c58a4 62.74%,#3061aa 69.01%,#346ab0 75.28%,#3872b2 81.56%,#3d7bb5 87.83%,#4182b9 94.10%,#4689bc 100.00%)"></div><div style="height:13.000px;background:linear-gradient(90deg,#5e84ba 0.00%,#5078b5 6.27%,#436baf 12.55%,#3b61a9 18.82%,#3357a2 25.09%,#2f529f 31.37%,#2b4d9c 37.64%,#294b9a 43.91%,#284899 50.19%,#2a509e 56.46%,#2c58a4 62.74%,#3061aa 69.01%,#346bb0 75.28%,#3973b3 81.56%,#3d7cb6 87.83%,#4283b9 94.10%,#468abc 100.00%)"></div><div style="height:13.000px;background:linear-gradient(90deg,#5e85ba 0.00%,#5078b5 6.27%,#436caf 12.55%,#3b62a9 18.82%,#3358a2 25.09%,#2f539f 31.37%,#2b4e9c 37.64%,#294b9b 43.91%,#284999 50.19%,#2a519f 56.46%,#2d59a4 62.74%,#3062aa 69.01%,#346bb0 75.28%,#3974b3 81.56%,#3d7db6 87.83%,#4284b9 94.10%,#468bbc 100.00%)"></div><div style="height:13.000px;background:linear-gradient(90deg,#5e85ba 0.00%,#5079b5 6.27%,#426cb0 12.55%,#3a62a9 18.82%,#3358a2 25.09%,#2f539f 31.37%,#2b4e9c 37.64%,#294c9b 43.91%,#284999 50.19%,#2a529f 56.46%,#2d5aa5 62.74%,#3163ab 69.01%,#356cb0 75.28%,#3975b3 81.56%,#3e7eb6 87.83%,#4285b9 94.10%,#478cbc 100.00%)"></div><div style="height:13.000px;background:linear-gradient(90deg,#5e86bb 0.00%,#5079b5 6.27%,#426db0 12.55%,#3a63a9 18.82%,#3259a3 25.09%,#2f54a0 31.37%,#2b4f9d 37.64%,#294c9b 43.91%,#284a99 50.19%,#2a529f 56.46%,#2d5ba5 62.74%,#3164ab 69.01%,#356db1 75.28%,#3a76b4 81.56%,#3e7fb6 87.83%,#4386ba 94.10%,#478dbd 100.00%)"></div><div style="height:13.000px;background:linear-gradient(90deg,#5e87bb 0.00%,#507ab5 6.27%,#426db0 12.55%,#3a63a9 18.82%,#3259a3 25.09%,#2e54a0 31.37%,#2b4f9d 37.64%,#294d9b 43.91%,#284a9a 50.19%,#2b53a0 56.46%,#2d5ca5 62.74%,#3165ab 69.01%,#356eb1 75.28%,#3a77b4 81.56%,#3e80b7 87.83%,#4387ba 94.10%,#488ebd 100.00%)"></div><div style="height:13.000px;background:linear-gradient(90deg,#5e87bb 0.00%,#507bb6 6.27%,#426eb0 12.55%,#3a64aa 18.82%,#325aa3 25.09%,#2e55a0 31.37%,#2b509d 37.64%,#294e9c 43.91%,#284b9a 50.19%,#2b54a0 56.46%,#2d5da6 62.74%,#3166ab 69.01%,#356fb1 75.28%,#3a78b4 81.56%,#3f81b7 87.83%,#4488ba 94.10%,#488fbd 100.00%)"></div><div style="height:13.000px;background:linear-gradient(90deg,#5e88bb 0.00%,#507bb6 6.27%,#426eb0 12.55%,#3a64aa 18.82%,#325aa3 25.09%,#2e55a0 31.37%,#2b519d 37.64%,#294e9c 43.91%,#284c9a 50.19%,#2b55a0 56.46%,#2e5ea6 62.74%,#3267ac 69.01%,#3670b2 75.28%,#3a79b4 81.56%,#3f82b7 87.83%,#4489ba 94.10%,#4990bd 100.00%)"></div><div style="height:13.000px;background:linear-gradient(90deg,#5e89bc 0.00%,#507cb6 6.27%,#426fb0 12.55%,#3a65aa 18.82%,#325ba3 25.09%,#2e56a1 31.37%,#2b519e 37.64%,#294f9c 43.91%,#284c9b 50.19%,#2b55a0 56.46%,#2e5ea6 62.74%,#3268ac 69.01%,#3671b2 75.28%,#3b7ab5 81.56%,#4083b7 87.83%,#458abb 94.10%,#4991be 100.00%)"></div><div style="height:13.000px;background:linear-gradient(90deg,#5e8abc 0.00%,#507db6 6.27%,#4170b1 12.55%,#3965aa 18.82%,#315ba4 25.09%,#2e56a1 31.37%,#2a529e 37.64%,#294f9c 43.91%,#284d9b 50.19%,#2b56a1 56.46%,#2e5fa7 62.74%,#3268ac 69.01%,#3672b2 75.28%,#3b7bb5 81.56%,#4084b8 87.83%,#458bbb 94.10%,#4a92be 100.00%)"></div><div style="height:13.000px;background:linear-gradient(90deg,#5e8abc 0.00%,#507db6 6.27%,#4170b1 12.55%,#3966aa 18.82%,#315ca4 25.09%,#2e57a1 31.37%,#2a529e 37.64%,#29509d 43.91%,#284e9b 50.19%,#2b57a1 56.46%,#2e60a7 62.74%,#3269ad 69.01%,#3773b2 75.28%,#3b7cb5 81.56%,#4085b8 87.83%,#458cbb 94.10%,#4a93be 100.00%)"></div><div style="height:13.000px;background:linear-gradient(90deg,#5e8bbc 0.00%,#4f7eb7 6.27%,#4171b1 12.55%,#3966aa 18.82%,#315ca4 25.09%,#2e57a1 31.37%,#2a539e 37.64%,#29509d 43.91%,#284e9c 50.19%,#2b58a1 56.46%,#2e61a7 62.74%,#336aad 69.01%,#3774b3 75.28%,#3c7db5 81.56%,#4186b8 87.83%,#468dbb 94.10%,#4b94be 100.00%)"></div><div style="height:13.000px;background:linear-gradient(90deg,#5e8cbd 0.00%,#4f7eb7 6.27%,#4171b1 12.55%,#3967ab 18.82%,#315da4 25.09%,#2e58a1 31.37%,#2a539f 37.64%,#29519d 43.91%,#284f9c 50.19%,#2c58a2 56.46%,#2f62a8 62.74%,#336bad 69.01%,#3774b3 75.28%,#3c7eb6 81.56%,#4187b8 87.83%,#468ebc 94.10%,#4b95bf 100.00%)"></div><div style="height:13.000px;background:linear-gradient(90deg,#5e8cbd 0.00%,#4f7fb7 6.27%,#4172b1 12.55%,#3967ab 18.82%,#315da4 25.09%,#2d58a2 31.37%,#2a549f 37.64%,#29529e 43.91%,#284f9c 50.19%,#2c59a2 56.46%,#2f63a8 62.74%,#336cae 69.01%,#3775b3 75.28%,#3c7eb6 81.56%,#4188b9 87.83%,#478fbc 94.10%,#4c96bf 100.00%)"></div><div style="height:13.000px;background:linear-gradient(90deg,#5e8dbd 0.00%,#4f80b7 6.27%,#4072b2 12.55%,#3868ab 18.82%,#305ea5 25.09%,#2d59a2 31.37%,#2a549f 37.64%,#29529e 43.91%,#29509c 50.19%,#2c5aa2 56.46%,#2f63a8 62.74%,#336dae 69.01%,#3876b3 75.28%,#3d7fb6 81.56%,#4289b9 87.83%,#4790bc 94.10%,#4c97bf 100.00%)"></div><div style="height:13.000px;background:linear-gradient(90deg,#5e8ebd 0.00%,#4f80b8 6.27%,#4073b2 12.55%,#3868ab 18.82%,#305ea5 25.09%,#2d59a2 31.37%,#2a559f 37.64%,#29539e 43.91%,#29519d 50.19%,#2c5ba3 56.46%,#2f64a9 62.74%,#346eae 69.01%,#3877b4 75.28%,#3d80b6 81.56%,#428ab9 87.83%,#4791bc 94.10%,#4c99bf 100.00%)"></div><div style="height:13.000px;background:linear-gradient(90deg,#5e8ebd 0.00%,#4f81b8 6.27%,#4073b2 12.55%,#3869ab 18.82%,#305fa5 25.09%,#2d5aa2 31.37%,#2a55a0 37.64%,#29539e 43.91%,#29519d 50.19%,#2c5ba3 56.46%,#2f65a9 62.74%,#346fae 69.01%,#3878b4 75.28%,#3d81b7 81.56%,#438bb9 87.83%,#4892bd 94.10%,#4d9abf 100.00%)"></div><div style="height:13.000px;background:linear-gradient(90deg,#5e8fbe 0.00%,#4f81b8 6.27%,#4074b2 12.55%,#3869ac 18.82%,#305fa5 25.09%,#2d5ba3 31.37%,#2a56a0 37.64%,#29549f 43.91%,#29529d 50.19%,#2c5ca3 56.46%,#3066a9 62.74%,#346faf 69.01%,#3979b4 75.28%,#3e82b7 81.56%,#438cba 87.83%,#4893bd 94.10%,#4d9bc0 100.00%)"></div><div style="height:13.000px;background:linear-gradient(90deg,#5e90be 0.00%,#4f82b8 6.27%,#4074b2 12.55%,#386aac 18.82%,#305fa5 25.09%,#2d5ba3 31.37%,#2a57a0 37.64%,#29559f 43.91%,#29539e 50.19%,#2c5da4 56.46%,#3067aa 62.74%,#3470af 69.01%,#397ab5 75.28%,#3e83b7 81.56%,#438cba 87.83%,#4994bd 94.10%,#4e9cc0 100.00%)"></div><div style="height:13.000px;background:linear-gradient(90deg,#5e91be 0.00%,#4f83b8 6.27%,#4075b3 12.55%,#386bac 18.82%,#3060a6 25.09%,#2d5ca3 31.37%,#2a57a1 37.64%,#29559f 43.91%,#29539e 50.19%,#2d5ea4 56.46%,#3068aa 62.74%,#3571af 69.01%,#397bb5 75.28%,#3e84b8 81.56%,#448eba 87.83%,#4995bd 94.10%,#4e9dc0 100.00%)"></div><div style="height:13.000px;background:linear-gradient(90deg,#5f92bf 0.00%,#4f84b9 6.27%,#4076b3 12.55%,#386bad 18.82%,#3061a6 25.09%,#2d5da4 31.37%,#2a58a1 37.64%,#2a56a0 43.91%,#29549f 50.19%,#2d5fa5 56.46%,#3169ab 62.74%,#3572b0 69.01%,#3a7cb5 75.28%,#3f85b8 81.56%,#448fbb 87.83%,#4a97be 94.10%,#4f9ec1 100.00%)"></div><div style="height:13.000px;background:linear-gradient(90deg,#5f93bf 0.00%,#4f85b9 6.27%,#4077b3 12.55%,#386cad 18.82%,#3062a6 25.09%,#2d5da4 31.37%,#2a59a1 37.64%,#2a57a0 43.91%,#2a559f 50.19%,#2d60a5 56.46%,#316aab 62.74%,#3673b0 69.01%,#3a7db6 75.28%,#3f86b8 81.56%,#4590bb 87.83%,#4a98be 94.10%,#509fc1 100.00%)"></div><div style="height:13.000px;background:linear-gradient(90deg,#5f94c0 0.00%,#5086ba 6.27%,#4078b4 12.55%,#386dad 18.82%,#3062a7 25.09%,#2d5ea4 31.37%,#2a5aa2 37.64%,#2a58a1 43.91%,#2a569f 50.19%,#2e60a5 56.46%,#316bab 62.74%,#3675b1 69.01%,#3b7eb6 75.28%,#4088b9 81.56%,#4591bb 87.83%,#4b99be 94.10%,#50a0c1 100.00%)"></div><div style="height:13.000px;background:linear-gradient(90deg,#6095c0 0.00%,#5087ba 6.27%,#4079b4 12.55%,#386eae 18.82%,#3063a7 25.09%,#2d5fa5 31.37%,#2b5ba2 37.64%,#2a59a1 43.91%,#2a57a0 50.19%,#2e61a6 56.46%,#326cac 62.74%,#3676b1 69.01%,#3b7fb7 75.28%,#4089b9 81.56%,#4692bc 87.83%,#4b9abf 94.10%,#51a1c2 100.00%)"></div><div style="height:13.000px;background:linear-gradient(90deg,#6096c1 0.00%,#5088bb 6.27%,#4179b5 12.55%,#386fae 18.82%,#3064a8 25.09%,#2e60a5 31.37%,#2b5ba3 37.64%,#2b5aa2 43.91%,#2a58a0 50.19%,#2e62a6 56.46%,#326dac 62.74%,#3777b2 69.01%,#3b80b7 75.28%,#418aba 81.56%,#4693bc 87.83%,#4c9bbf 94.10%,#51a3c2 100.00%)"></div><div style="height:13.000px;background:linear-gradient(90deg,#6097c1 0.00%,#5089bb 6.27%,#417ab5 12.55%,#3970af 18.82%,#3065a8 25.09%,#2e60a6 31.37%,#2b5ca3 37.64%,#2b5aa2 43.91%,#2b59a1 50.19%,#2f63a7 56.46%,#336ead 62.74%,#3778b2 69.01%,#3c81b7 75.28%,#418bba 81.56%,#4794bd 87.83%,#4d9cc0 94.10%,#52a4c2 100.00%)"></div><div style="height:13.000px;background:linear-gradient(90deg,#6198c2 0.00%,#518abc 6.27%,#417bb6 12.55%,#3970af 18.82%,#3166a8 25.09%,#2e61a6 31.37%,#2b5da4 37.64%,#2b5ba3 43.91%,#2b5aa1 50.19%,#2f64a7 56.46%,#336fad 62.74%,#3879b3 69.01%,#3c82b8 75.28%,#428cba 81.56%,#4795bd 87.83%,#4d9dc0 94.10%,#52a5c3 100.00%)"></div><div style="height:13.000px;background:linear-gradient(90deg,#6199c2 0.00%,#518abc 6.27%,#417cb6 12.55%,#3971af 18.82%,#3166a9 25.09%,#2e62a6 31.37%,#2b5ea4 37.64%,#2b5ca3 43.91%,#2b5aa2 50.19%,#2f65a8 56.46%,#3370ae 62.74%,#387ab3 69.01%,#3d84b8 75.28%,#428dbb 81.56%,#4897bd 87.83%,#4e9fc0 94.10%,#53a6c3 100.00%)"></div><div style="height:13.000px;background:linear-gradient(90deg,#619ac2 0.00%,#518bbc 6.27%,#417db6 12.55%,#3972b0 18.82%,#3167a9 25.09%,#2e63a7 31.37%,#2c5fa5 37.64%,#2c5da3 43.91%,#2c5ba2 50.19%,#3066a8 56.46%,#3471ae 62.74%,#387bb4 69.01%,#3d85b9 75.28%,#438ebb 81.56%,#4898be 87.83%,#4ea0c1 94.10%,#54a7c3 100.00%)"></div><div style="height:13.000px;background:linear-gradient(90deg,#629bc3 0.00%,#518cbd 6.27%,#417eb7 12.55%,#3973b0 18.82%,#3168aa 25.09%,#2e64a7 31.37%,#2c5fa5 37.64%,#2c5ea4 43.91%,#2c5ca3 50.19%,#3067a9 56.46%,#3472af 62.74%,#397cb4 69.01%,#3e86b9 75.28%,#438fbc 81.56%,#4999be 87.83%,#4fa1c1 94.10%,#54a8c4 100.00%)"></div><div style="height:13.000px;background:linear-gradient(90deg,#629cc3 0.00%,#528dbd 6.27%,#417fb7 12.55%,#3974b1 18.82%,#3169aa 25.09%,#2e64a8 31.37%,#2c60a5 37.64%,#2c5fa4 43.91%,#2c5da3 50.19%,#3068a9 56.46%,#3573af 62.74%,#397db4 69.01%,#3e87b9 75.28%,#4490bc 81.56%,#499abf 87.83%,#4fa2c1 94.10%,#55a9c4 100.00%)"></div><div style="height:13.000px;background:linear-gradient(90deg,#629dc4 0.00%,#528ebe 6.27%,#427fb8 12.55%,#3974b1 18.82%,#3169aa 25.09%,#2f65a8 31.37%,#2c61a6 37.64%,#2c5fa5 43.91%,#2d5ea4 50.19%,#3169aa 56.46%,#3574b0 62.74%,#3a7eb5 69.01%,#3f88ba 75.28%,#4491bc 81.56%,#4a9bbf 87.83%,#50a3c2 94.10%,#55abc4 100.00%)"></div><div style="height:13.000px;background:linear-gradient(90deg,#639ec4 0.00%,#528fbe 6.27%,#4280b8 12.55%,#3975b1 18.82%,#316aab 25.09%,#2f66a9 31.37%,#2c62a6 37.64%,#2d60a5 43.91%,#2d5fa4 50.19%,#316aaa 56.46%,#3575b0 62.74%,#3a7fb5 69.01%,#3f89ba 75.28%,#4593bd 81.56%,#4a9cbf 87.83%,#50a4c2 94.10%,#56acc5 100.00%)"></div><div style="height:13.000px;background:linear-gradient(90deg,#639fc5 0.00%,#5290bf 6.27%,#4281b8 12.55%,#3a76b2 18.82%,#316bab 25.09%,#2f67a9 31.37%,#2c63a7 37.64%,#2d61a6 43.91%,#2d60a5 50.19%,#316bab 56.46%,#3676b1 62.74%,#3b80b6 69.01%,#3f8abb 75.28%,#4594bd 81.56%,#4b9dc0 87.83%,#51a5c2 94.10%,#56adc5 100.00%)"></div><div style="height:13.000px;background:linear-gradient(90deg,#63a0c5 0.00%,#5391bf 6.27%,#4282b9 12.55%,#3a77b2 18.82%,#316cac 25.09%,#2f68a9 31.37%,#2d63a7 37.64%,#2d62a6 43.91%,#2d60a5 50.19%,#326cab 56.46%,#3677b1 62.74%,#3b81b6 69.01%,#408bbb 75.28%,#4695be 81.56%,#4b9ec0 87.83%,#51a7c3 94.10%,#57aec5 100.00%)"></div><div style="height:13.000px;background:linear-gradient(90deg,#64a1c6 0.00%,#5392bf 6.27%,#4283b9 12.55%,#3a78b3 18.82%,#316cac 25.09%,#2f68aa 31.37%,#2d64a8 37.64%,#2d63a7 43.91%,#2e61a6 50.19%,#326dac 56.46%,#3778b2 62.74%,#3b82b7 69.01%,#408cbc 75.28%,#4696be 81.56%,#4ca0c1 87.83%,#52a8c3 94.10%,#58afc6 100.00%)"></div><div style="height:13.000px;background:linear-gradient(90deg,#64a2c6 0.00%,#5393c0 6.27%,#4284ba 12.55%,#3a78b3 18.82%,#326dac 25.09%,#2f69aa 31.37%,#2d65a8 37.64%,#2e64a7 43.91%,#2e62a6 50.19%,#336eac 56.46%,#3779b2 62.74%,#3c83b7 69.01%,#418dbc 75.28%,#4797be 81.56%,#4da1c1 87.83%,#53a9c4 94.10%,#58b0c6 100.00%)"></div><div style="height:13.000px;background:linear-gradient(90deg,#65a3c7 0.00%,#5494c0 6.27%,#4384ba 12.55%,#3a79b3 18.82%,#326ead 25.09%,#306aab 31.37%,#2e66a8 37.64%,#2e64a7 43.91%,#2f63a6 50.19%,#336fac 56.46%,#387ab3 62.74%,#3c84b7 69.01%,#418ebc 75.28%,#4798bf 81.56%,#4da2c1 87.83%,#53aac4 94.10%,#59b1c6 100.00%)"></div><div style="height:13.000px;background:linear-gradient(90deg,#66a4c7 0.00%,#5495c1 6.27%,#4385ba 12.55%,#3b7ab4 18.82%,#326fad 25.09%,#306aab 31.37%,#2e66a9 37.64%,#2e65a8 43.91%,#2f64a7 50.19%,#346fad 56.46%,#387bb3 62.74%,#3d85b8 69.01%,#428fbc 75.28%,#4899bf 81.56%,#4ea2c1 87.83%,#54abc4 94.10%,#59b2c6 100.00%)"></div><div style="height:13.000px;background:linear-gradient(90deg,#66a5c8 0.00%,#5596c1 6.27%,#4486bb 12.55%,#3b7bb4 18.82%,#336fad 25.09%,#316bab 31.37%,#2e67a9 37.64%,#2f66a8 43.91%,#2f64a7 50.19%,#3470ad 56.46%,#397cb3 62.74%,#3e86b8 69.01%,#4390bd 75.28%,#489abf 81.56%,#4ea3c1 87.83%,#54acc4 94.10%,#5ab3c6 100.00%)"></div><div style="height:13.000px;background:linear-gradient(90deg,#67a6c8 0.00%,#5696c2 6.27%,#4487bb 12.55%,#3c7bb4 18.82%,#3370ae 25.09%,#316cac 31.37%,#2f68a9 37.64%,#2f66a8 43.91%,#3065a7 50.19%,#3571ae 56.46%,#397db4 62.74%,#3e87b8 69.01%,#4391bd 75.28%,#499bbf 81.56%,#4fa4c2 87.83%,#55acc4 94.10%,#5bb4c7 100.00%)"></div><div style="height:13.000px;background:linear-gradient(90deg,#68a7c9 0.00%,#5697c2 6.27%,#4587bc 12.55%,#3c7cb5 18.82%,#3470ae 25.09%,#316cac 31.37%,#2f68aa 37.64%,#3067a9 43.91%,#3066a8 50.19%,#3572ae 56.46%,#3a7eb4 62.74%,#3f88b9 69.01%,#4492bd 75.28%,#4a9bbf 81.56%,#4fa5c2 87.83%,#55adc4 94.10%,#5bb5c7 100.00%)"></div><div style="height:13.000px;background:linear-gradient(90deg,#69a8c9 0.00%,#5798c2 6.27%,#4588bc 12.55%,#3d7db5 18.82%,#3471ae 25.09%,#326dac 31.37%,#3069aa 37.64%,#3068a9 43.91%,#3166a8 50.19%,#3673ae 56.46%,#3a7fb4 62.74%,#3f89b9 69.01%,#4493bd 75.28%,#4a9cc0 81.56%,#50a6c2 87.83%,#56aec4 94.10%,#5cb6c7 100.00%)"></div><div style="height:13.000px;background:linear-gradient(90deg,#69a9c9 0.00%,#5799c3 6.27%,#4689bc 12.55%,#3d7db6 18.82%,#3472af 25.09%,#326ead 31.37%,#306aab 37.64%,#3168aa 43.91%,#3167a9 50.19%,#3673af 56.46%,#3b80b5 62.74%,#408ab9 69.01%,#4593be 75.28%,#4b9dc0 81.56%,#51a7c2 87.83%,#57afc5 94.10%,#5cb7c7 100.00%)"></div><div style="height:13.000px;background:linear-gradient(90deg,#6aaaca 0.00%,#589ac3 6.27%,#468abd 12.55%,#3d7eb6 18.82%,#3572af 25.09%,#336ead 31.37%,#306aab 37.64%,#3169aa 43.91%,#3268a9 50.19%,#3774af 56.46%,#3b81b5 62.74%,#408ab9 69.01%,#4594be 75.28%,#4b9ec0 81.56%,#51a8c2 87.83%,#57b0c5 94.10%,#5db8c7 100.00%)"></div><div style="height:13.000px;background:linear-gradient(90deg,#6babca 0.00%,#599bc4 6.27%,#478abd 12.55%,#3e7fb6 18.82%,#3573af 25.09%,#336fad 31.37%,#316bab 37.64%,#326aaa 43.91%,#3269a9 50.19%,#3775af 56.46%,#3c81b5 62.74%,#418bba 69.01%,#4695be 75.28%,#4c9fc0 81.56%,#52a9c3 87.83%,#58b1c5 94.10%,#5eb9c7 100.00%)"></div><div style="height:13.000px;background:linear-gradient(90deg,#6baccb 0.00%,#599bc4 6.27%,#478bbd 12.55%,#3e7fb7 18.82%,#3674b0 25.09%,#3370ae 31.37%,#316cac 37.64%,#326aab 43.91%,#3369aa 50.19%,#3876b0 56.46%,#3c82b6 62.74%,#418cba 69.01%,#4696be 75.28%,#4ca0c1 81.56%,#52aac3 87.83%,#58b2c5 94.10%,#5ebac7 100.00%)"></div><div style="height:13.000px;background:linear-gradient(90deg,#6cadcb 0.00%,#5a9cc5 6.27%,#478cbe 12.55%,#3f80b7 18.82%,#3674b0 25.09%,#3470ae 31.37%,#326cac 37.64%,#336bab 43.91%,#336aaa 50.19%,#3877b0 56.46%,#3d83b6 62.74%,#428dba 69.01%,#4797bf 75.28%,#4da1c1 81.56%,#53abc3 87.83%,#59b3c5 94.10%,#5fbbc7 100.00%)"></div><div style="height:13.000px;background:linear-gradient(90deg,#6daecc 0.00%,#5a9dc5 6.27%,#488dbe 12.55%,#3f81b7 18.82%,#3675b0 25.09%,#3471ae 31.37%,#326dac 37.64%,#336cab 43.91%,#346baa 50.19%,#3977b0 56.46%,#3e84b6 62.74%,#438ebb 69.01%,#4898bf 75.28%,#4da2c1 81.56%,#53acc3 87.83%,#5ab4c5 94.10%,#5fbcc7 100.00%)"></div><div style="height:13.000px;background:linear-gradient(90deg,#6eafcc 0.00%,#5b9ec5 6.27%,#488dbf 12.55%,#4082b8 18.82%,#3776b1 25.09%,#3572af 31.37%,#336ead 37.64%,#336dac 43.91%,#346bab 50.19%,#3978b1 56.46%,#3e85b7 62.74%,#438fbb 69.01%,#4899bf 75.28%,#4ea3c1 81.56%,#54adc3 87.83%,#5ab5c6 94.10%,#60bdc8 100.00%)"></div><div style="height:13.000px;background:linear-gradient(90deg,#6eb0cd 0.00%,#5c9fc6 6.27%,#498ebf 12.55%,#4082b8 18.82%,#3776b1 25.09%,#3572af 31.37%,#336ead 37.64%,#346dac 43.91%,#356cab 50.19%,#3a79b1 56.46%,#3f86b7 62.74%,#4490bb 69.01%,#499abf 75.28%,#4fa4c1 81.56%,#55aec4 87.83%,#5bb6c6 94.10%,#61bec8 100.00%)"></div><div style="height:13.000px;background:linear-gradient(90deg,#6fb1cd 0.00%,#5ca0c6 6.27%,#498fbf 12.55%,#4083b8 18.82%,#3777b1 25.09%,#3573af 31.37%,#336fad 37.64%,#346eac 43.91%,#356dab 50.19%,#3a7ab1 56.46%,#3f87b7 62.74%,#4491bc 69.01%,#499bc0 75.28%,#4fa5c2 81.56%,#55afc4 87.83%,#5bb7c6 94.10%,#61bfc8 100.00%)"></div><div style="height:13.000px;background:linear-gradient(90deg,#70b2ce 0.00%,#5da1c7 6.27%,#4a90c0 12.55%,#4184b9 18.82%,#3878b2 25.09%,#3674b0 31.37%,#3470ae 37.64%,#356fad 43.91%,#366eac 50.19%,#3b7bb2 56.46%,#4088b8 62.74%,#4592bc 69.01%,#4a9cc0 75.28%,#50a6c2 81.56%,#56b0c4 87.83%,#5cb8c6 94.10%,#62c0c8 100.00%)"></div></div>
<div id="sh"></div>
<div id="w"><div id="c">
<div class="a" style="left:244.00px;top:167.00px;width:8.50px;height:1460.00px;background:#f8f8f8;"></div>
<div class="a" style="left:252.20px;top:167.00px;width:1.00px;height:1460.00px;background:#ececec;"></div>
<svg class="a" style="left:284.00px;top:191.70px;" width="32.00" height="32.00" viewBox="0 0 32 32"><g fill="#242424"><circle cx="4" cy="4" r="3.1"/><circle cx="4" cy="16" r="3.1"/><circle cx="4" cy="27.5" r="3.1"/><circle cx="16" cy="4" r="3.1"/><circle cx="16" cy="16" r="3.1"/><circle cx="16" cy="27.5" r="3.1"/><circle cx="28" cy="4" r="3.1"/><circle cx="28" cy="16" r="3.1"/><circle cx="28" cy="27.5" r="3.1"/></g></svg>
<span class="t" style="left:466.89px;top:197px;font-size:27.90px;color:#242424;transform:scaleX(0.9915);">Differences-Report</span>
<svg class="a" style="left:762.50px;top:206.00px;" width="18.00" height="11.00" viewBox="0 0 18 11"><path d="M1.5 1.5 L9.00 9.50 L16.50 1.5" fill="none" stroke="#424242" stroke-width="1.8" stroke-linecap="round" stroke-linejoin="round"/></svg>
<div class="a" style="left:1240.00px;top:177.00px;width:936.00px;height:64.00px;background:#fafafa;border-radius:8px;box-shadow:0 1px 3px rgba(0,0,0,0.14),0 0 1px rgba(0,0,0,0.12);"></div>
<span class="t" style="left:1329.88px;top:197px;font-size:27.80px;color:#707070;transform:scaleX(1.0066);">Search for tools, help, and more (Option + Q)</span>
<span class="t" style="left:291.14px;top:277px;font-size:28.00px;color:#424242;transform:scaleX(0.9214);">File</span>
<span class="t" style="left:494.48px;top:277px;font-size:28.00px;color:#424242;">Insert</span>
<span class="t" style="left:608.95px;top:277px;font-size:28.00px;color:#424242;transform:scaleX(0.9377);">Share</span>
<span class="t" style="left:721.36px;top:277px;font-size:28.00px;color:#424242;transform:scaleX(0.9573);">Page Layout</span>
<span class="t" style="left:915.82px;top:277px;font-size:28.00px;color:#424242;transform:scaleX(0.9742);">Formulas</span>
<span class="t" style="left:1072.84px;top:277px;font-size:28.00px;color:#424242;transform:scaleX(0.9629);">Data</span>
<span class="t" style="left:1174.93px;top:277px;font-size:28.00px;color:#424242;transform:scaleX(0.9235);">Review</span>
<span class="t" style="left:1305.50px;top:277px;font-size:28.00px;color:#424242;transform:scaleX(0.9507);">View</span>
<span class="t" style="left:1408.75px;top:277px;font-size:28.00px;color:#424242;transform:scaleX(1.0171);">Automate</span>
<span class="t" style="left:1573.46px;top:277px;font-size:28.00px;color:#424242;transform:scaleX(1.0217);">Help</span>
<span class="t" style="left:1675.33px;top:277px;font-size:28.00px;color:#424242;transform:scaleX(0.9679);">Draw</span>
<span class="t" style="left:376.75px;top:275px;font-size:30.00px;color:#242424;transform:scaleX(0.9359);-webkit-text-stroke:0.75px #242424;">Home</span>
<div class="a" style="left:377.00px;top:313.00px;width:75.20px;height:4.10px;background:#2f7d48;border-radius:2px;"></div>
<div class="a" style="left:2487.50px;top:265.00px;width:190.00px;height:47.60px;background:#ffffff;border:2px solid #d2d2d2;border-radius:8.5px;"></div>
<div class="a" style="left:2694.50px;top:265.00px;width:168.50px;height:47.60px;background:#ffffff;border:2px solid #d2d2d2;border-radius:8.5px;"></div>
<div class="a" style="left:2880.50px;top:265.00px;width:119.50px;height:47.60px;background:#ffffff;border:2px solid #d2d2d2;border-radius:8.5px;"></div>
<span class="t" style="left:2544.91px;top:278px;font-size:24.20px;color:#242424;transform:scaleX(0.9830);">Comments</span>
<span class="t" style="left:2751.83px;top:278px;font-size:24.20px;color:#242424;transform:scaleX(0.9698);">Catch up</span>
<span class="t" style="left:2936.81px;top:278px;font-size:24.20px;color:#242424;">Editing</span>
<div class="a" style="left:269.00px;top:329.00px;width:2760.00px;height:200.00px;background:#ffffff;border-radius:20px;box-shadow:0 2px 8px rgba(0,0,0,0.16),0 0 2px rgba(0,0,0,0.10);"></div>
<div class="a" style="left:357.25px;top:337.50px;width:1.60px;height:183.50px;background:#c4c4c4;"></div>
<div class="a" style="left:535.25px;top:337.50px;width:1.60px;height:183.50px;background:#c4c4c4;"></div>
<div class="a" style="left:1077.25px;top:337.50px;width:1.60px;height:183.50px;background:#c4c4c4;"></div>
<div class="a" style="left:1573.50px;top:337.50px;width:1.60px;height:183.50px;background:#c4c4c4;"></div>
<div class="a" style="left:1907.25px;top:337.50px;width:1.60px;height:183.50px;background:#c4c4c4;"></div>
<div class="a" style="left:2289.25px;top:337.50px;width:1.60px;height:183.50px;background:#c4c4c4;"></div>
<div class="a" style="left:2566.25px;top:337.50px;width:1.60px;height:183.50px;background:#c4c4c4;"></div>
<div class="a" style="left:1291.30px;top:345.00px;width:1.50px;height:135.50px;background:#c4c4c4;"></div>
<span class="t" style="left:288.37px;top:493px;font-size:21.00px;color:#424242;transform:scaleX(0.9733);">Undo</span>
<span class="t" style="left:403.49px;top:493px;font-size:21.00px;color:#424242;transform:scaleX(0.9649);">Clipboard</span>
<span class="t" style="left:774.92px;top:493px;font-size:21.00px;color:#424242;transform:scaleX(0.9425);">Font</span>
<span class="t" style="left:1268.75px;top:493px;font-size:21.00px;color:#424242;transform:scaleX(0.9631);">Alignment</span>
<span class="t" style="left:1691.35px;top:493px;font-size:21.00px;color:#424242;transform:scaleX(0.9840);">Number</span>
<span class="t" style="left:2074.28px;top:493px;font-size:21.00px;color:#424242;transform:scaleX(0.8625);">Styles</span>
<span class="t" style="left:2407.83px;top:493px;font-size:21.00px;color:#424242;transform:scaleX(0.8734);">Cells</span>
<span class="t" style="left:2733.37px;top:493px;font-size:21.00px;color:#424242;transform:scaleX(0.9703);">Editing</span>
<span class="t" style="left:386.75px;top:418px;font-size:22.60px;color:#242424;transform:scaleX(0.9702);">Paste</span>
<svg class="a" style="left:409.50px;top:455.00px;" width="13.00" height="9.00" viewBox="0 0 13 9"><path d="M1.5 1.5 L6.50 7.50 L11.50 1.5" fill="none" stroke="#242424" stroke-width="2.0" stroke-linecap="round" stroke-linejoin="round"/></svg>
<div class="a" style="left:553.50px;top:357.00px;width:356.50px;height:46.00px;background:#ffffff;border:2px solid #cdcdcd;border-radius:8px;"></div>
<div class="a" style="left:807.30px;top:358.00px;width:2.00px;height:44.00px;background:#cdcdcd;"></div>
<span class="t" style="left:571.60px;top:372px;font-size:23.60px;color:#242424;">Aptos Narrow (Bo...</span>
<svg class="a" style="left:788.50px;top:376.50px;" width="14.00" height="9.20" viewBox="0 0 14 9.2"><path d="M1.5 1.5 L7.00 7.70 L12.50 1.5" fill="none" stroke="#242424" stroke-width="2.0" stroke-linecap="round" stroke-linejoin="round"/></svg>
<span class="t" style="left:825.73px;top:372px;font-size:23.60px;color:#242424;transform:scaleX(0.9492);">12</span>
<svg class="a" style="left:891.00px;top:376.50px;" width="13.50" height="9.20" viewBox="0 0 13.5 9.2"><path d="M1.5 1.5 L6.75 7.70 L12.00 1.5" fill="none" stroke="#242424" stroke-width="2.0" stroke-linecap="round" stroke-linejoin="round"/></svg>
<span class="t" style="left:1357.40px;top:371px;font-size:23.60px;color:#242424;transform:scaleX(0.9934);">Wrap Text</span>
<span class="t" style="left:1356.95px;top:430px;font-size:23.60px;color:#242424;transform:scaleX(1.0317);">Merge &amp; Center</span>
<svg class="a" style="left:1537.25px;top:434.50px;" width="13.70" height="9.20" viewBox="0 0 13.7 9.2"><path d="M1.5 1.5 L6.85 7.70 L12.20 1.5" fill="none" stroke="#242424" stroke-width="2.0" stroke-linecap="round" stroke-linejoin="round"/></svg>
<div class="a" style="left:1591.75px;top:357.00px;width:254.50px;height:46.00px;background:#ffffff;border:2px solid #cdcdcd;border-radius:8px;"></div>
<span class="t" style="left:1608.35px;top:372px;font-size:23.60px;color:#242424;transform:scaleX(0.9764);">General</span>
<svg class="a" style="left:1826.50px;top:376.50px;" width="13.70" height="9.20" viewBox="0 0 13.7 9.2"><path d="M1.5 1.5 L6.85 7.70 L12.20 1.5" fill="none" stroke="#242424" stroke-width="2.0" stroke-linecap="round" stroke-linejoin="round"/></svg>
<span class="t" style="left:1604.64px;top:427px;font-size:27.80px;color:#333;transform:scaleX(0.9254);">$€</span>
<svg class="a" style="left:1647.25px;top:435.00px;" width="13.70" height="9.20" viewBox="0 0 13.7 9.2"><path d="M1.5 1.5 L6.85 7.70 L12.20 1.5" fill="none" stroke="#242424" stroke-width="2.0" stroke-linecap="round" stroke-linejoin="round"/></svg>
<span class="t" style="left:1935.68px;top:420px;font-size:22.60px;color:#242424;transform:scaleX(1.0804);">Conditional</span>
<span class="t" style="left:1928.55px;top:452px;font-size:22.60px;color:#242424;transform:scaleX(1.0766);">Formatting</span>
<svg class="a" style="left:2049.50px;top:458.00px;" width="13.00" height="9.20" viewBox="0 0 13 9.2"><path d="M1.5 1.5 L6.50 7.70 L11.50 1.5" fill="none" stroke="#242424" stroke-width="2.0" stroke-linecap="round" stroke-linejoin="round"/></svg>
<span class="t" style="left:2072.60px;top:420px;font-size:22.60px;color:#242424;transform:scaleX(1.0490);">Format As</span>
<span class="t" style="left:2090.30px;top:452px;font-size:22.60px;color:#242424;transform:scaleX(0.9970);">Table</span>
<svg class="a" style="left:2148.50px;top:458.00px;" width="13.50" height="9.20" viewBox="0 0 13.5 9.2"><path d="M1.5 1.5 L6.75 7.70 L12.00 1.5" fill="none" stroke="#242424" stroke-width="2.0" stroke-linecap="round" stroke-linejoin="round"/></svg>
<span class="t" style="left:2208.84px;top:420px;font-size:22.60px;color:#242424;transform:scaleX(1.0306);">Cell</span>
<span class="t" style="left:2188.62px;top:452px;font-size:22.60px;color:#242424;transform:scaleX(0.9768);">Styles</span>
<svg class="a" style="left:2253.50px;top:458.00px;" width="13.50" height="9.20" viewBox="0 0 13.5 9.2"><path d="M1.5 1.5 L6.75 7.70 L12.00 1.5" fill="none" stroke="#242424" stroke-width="2.0" stroke-linecap="round" stroke-linejoin="round"/></svg>
<span class="t" style="left:2316.60px;top:420px;font-size:22.60px;color:#242424;transform:scaleX(1.0557);">Insert</span>
<svg class="a" style="left:2341.00px;top:458.00px;" width="13.50" height="9.20" viewBox="0 0 13.5 9.2"><path d="M1.5 1.5 L6.75 7.70 L12.00 1.5" fill="none" stroke="#242424" stroke-width="2.0" stroke-linecap="round" stroke-linejoin="round"/></svg>
<span class="t" style="left:2391.82px;top:420px;font-size:22.60px;color:#242424;transform:scaleX(1.0663);">Delete</span>
<svg class="a" style="left:2421.00px;top:458.00px;" width="13.50" height="9.20" viewBox="0 0 13.5 9.2"><path d="M1.5 1.5 L6.75 7.70 L12.00 1.5" fill="none" stroke="#242424" stroke-width="2.0" stroke-linecap="round" stroke-linejoin="round"/></svg>
<span class="t" style="left:2470.09px;top:420px;font-size:22.60px;color:#242424;transform:scaleX(1.0561);">Format</span>
<svg class="a" style="left:2503.50px;top:458.00px;" width="13.50" height="9.20" viewBox="0 0 13.5 9.2"><path d="M1.5 1.5 L6.75 7.70 L12.00 1.5" fill="none" stroke="#242424" stroke-width="2.0" stroke-linecap="round" stroke-linejoin="round"/></svg>
<span class="t" style="left:2641.00px;top:355px;font-size:23.60px;color:#242424;transform:scaleX(1.0096);">AutoSum</span>
<svg class="a" style="left:2746.50px;top:360.50px;" width="13.70" height="9.00" viewBox="0 0 13.7 9"><path d="M1.5 1.5 L6.85 7.50 L12.20 1.5" fill="none" stroke="#242424" stroke-width="2.0" stroke-linecap="round" stroke-linejoin="round"/></svg>
<span class="t" style="left:2639.88px;top:407px;font-size:23.60px;color:#242424;transform:scaleX(0.9457);">Clear</span>
<svg class="a" style="left:2702.25px;top:412.50px;" width="13.70" height="9.00" viewBox="0 0 13.7 9"><path d="M1.5 1.5 L6.85 7.50 L12.20 1.5" fill="none" stroke="#242424" stroke-width="2.0" stroke-linecap="round" stroke-linejoin="round"/></svg>
<span class="t" style="left:2779.50px;top:420px;font-size:22.60px;color:#242424;transform:scaleX(1.1062);">Sort &amp;</span>
<span class="t" style="left:2778.10px;top:452px;font-size:22.60px;color:#242424;transform:scaleX(1.0491);">Filter</span>
<svg class="a" style="left:2835.50px;top:458.00px;" width="13.50" height="9.20" viewBox="0 0 13.5 9.2"><path d="M1.5 1.5 L6.75 7.70 L12.00 1.5" fill="none" stroke="#242424" stroke-width="2.0" stroke-linecap="round" stroke-linejoin="round"/></svg>
<span class="t" style="left:2864.03px;top:420px;font-size:22.60px;color:#242424;transform:scaleX(1.0904);">Find &amp;</span>
<span class="t" style="left:2858.60px;top:452px;font-size:22.60px;color:#242424;transform:scaleX(0.9932);">Select</span>
<svg class="a" style="left:2926.00px;top:458.00px;" width="13.50" height="9.20" viewBox="0 0 13.5 9.2"><path d="M1.5 1.5 L6.75 7.70 L12.00 1.5" fill="none" stroke="#242424" stroke-width="2.0" stroke-linecap="round" stroke-linejoin="round"/></svg>
<div class="a" style="left:261.30px;top:537.30px;width:247.40px;height:47.40px;background:#ffffff;border:1.8px solid #e3e4e4;"></div>
<span class="t" style="left:270.58px;top:550px;font-size:27.60px;color:#242424;transform:scaleX(0.9620);">D6</span>
<svg class="a" style="left:485.00px;top:559.00px;" width="14.20" height="9.50" viewBox="0 0 14.2 9.5"><path d="M1.5 1.5 L7.10 8.00 L12.70 1.5" fill="none" stroke="#242424" stroke-width="2.0" stroke-linecap="round" stroke-linejoin="round"/></svg>
<div class="a" style="left:523.30px;top:537.30px;width:177.40px;height:47.40px;background:#ffffff;border:1.8px solid #e3e4e4;"></div>
<div class="a" style="left:707.40px;top:537.30px;width:2400.00px;height:47.40px;background:#ffffff;border:1.8px solid #e3e4e4;"></div>
<div class="a" style="left:337.50px;top:652.50px;width:2700.00px;height:1000.00px;background:#ffffff;"></div>
<div class="a" style="left:337.50px;top:916.25px;width:2568.00px;height:41.75px;background:#2d5f80;"></div>
<div class="a" style="left:337.50px;top:958.00px;width:2568.00px;height:86.00px;background:#c9e5f3;"></div>
<div class="a" style="left:337.50px;top:1130.50px;width:2568.00px;height:85.50px;background:#c9e5f3;"></div>
<div class="a" style="left:337.50px;top:1302.00px;width:2568.00px;height:42.00px;background:#c9e5f3;"></div>
<div class="a" style="left:253.00px;top:693.50px;width:84.50px;height:1.50px;background:#dcdcdc;"></div>
<div class="a" style="left:337.50px;top:693.60px;width:2700.00px;height:1.30px;background:#e1e1e1;"></div>
<div class="a" style="left:253.00px;top:873.75px;width:84.50px;height:1.50px;background:#dcdcdc;"></div>
<div class="a" style="left:337.50px;top:873.85px;width:2700.00px;height:1.30px;background:#e1e1e1;"></div>
<div class="a" style="left:253.00px;top:915.50px;width:84.50px;height:1.50px;background:#dcdcdc;"></div>
<div class="a" style="left:337.50px;top:915.60px;width:2700.00px;height:1.30px;background:#e1e1e1;"></div>
<div class="a" style="left:253.00px;top:957.25px;width:84.50px;height:1.50px;background:#dcdcdc;"></div>
<div class="a" style="left:337.50px;top:957.35px;width:2700.00px;height:1.30px;background:#e1e1e1;"></div>
<div class="a" style="left:253.00px;top:1043.25px;width:84.50px;height:1.50px;background:#dcdcdc;"></div>
<div class="a" style="left:337.50px;top:1043.35px;width:2700.00px;height:1.30px;background:#e1e1e1;"></div>
<div class="a" style="left:253.00px;top:1129.75px;width:84.50px;height:1.50px;background:#dcdcdc;"></div>
<div class="a" style="left:337.50px;top:1129.85px;width:2700.00px;height:1.30px;background:#e1e1e1;"></div>
<div class="a" style="left:253.00px;top:1215.25px;width:84.50px;height:1.50px;background:#dcdcdc;"></div>
<div class="a" style="left:337.50px;top:1215.35px;width:2700.00px;height:1.30px;background:#e1e1e1;"></div>
<div class="a" style="left:253.00px;top:1301.25px;width:84.50px;height:1.50px;background:#dcdcdc;"></div>
<div class="a" style="left:337.50px;top:1301.35px;width:2700.00px;height:1.30px;background:#e1e1e1;"></div>
<div class="a" style="left:253.00px;top:1343.25px;width:84.50px;height:1.50px;background:#dcdcdc;"></div>
<div class="a" style="left:337.50px;top:1343.35px;width:2700.00px;height:1.30px;background:#e1e1e1;"></div>
<div class="a" style="left:253.00px;top:1385.25px;width:84.50px;height:1.50px;background:#dcdcdc;"></div>
<div class="a" style="left:337.50px;top:1385.35px;width:2700.00px;height:1.30px;background:#e1e1e1;"></div>
<div class="a" style="left:253.00px;top:1427.25px;width:84.50px;height:1.50px;background:#dcdcdc;"></div>
<div class="a" style="left:337.50px;top:1427.35px;width:2700.00px;height:1.30px;background:#e1e1e1;"></div>
<div class="a" style="left:253.00px;top:1469.25px;width:84.50px;height:1.50px;background:#dcdcdc;"></div>
<div class="a" style="left:337.50px;top:1469.35px;width:2700.00px;height:1.30px;background:#e1e1e1;"></div>
<div class="a" style="left:253.00px;top:1511.25px;width:84.50px;height:1.50px;background:#dcdcdc;"></div>
<div class="a" style="left:337.50px;top:1511.35px;width:2700.00px;height:1.30px;background:#e1e1e1;"></div>
<div class="a" style="left:253.00px;top:1553.25px;width:84.50px;height:1.50px;background:#dcdcdc;"></div>
<div class="a" style="left:337.50px;top:1553.35px;width:2700.00px;height:1.30px;background:#e1e1e1;"></div>
<div class="a" style="left:253.00px;top:1595.25px;width:84.50px;height:1.50px;background:#dcdcdc;"></div>
<div class="a" style="left:337.50px;top:1595.35px;width:2700.00px;height:1.30px;background:#e1e1e1;"></div>
<div class="a" style="left:253.00px;top:1637.25px;width:84.50px;height:1.50px;background:#dcdcdc;"></div>
<div class="a" style="left:337.50px;top:1637.35px;width:2700.00px;height:1.30px;background:#e1e1e1;"></div>
<div class="a" style="left:2122.85px;top:615.00px;width:1.30px;height:1100.00px;background:#e1e1e1;"></div>
<div class="a" style="left:2554.85px;top:615.00px;width:1.30px;height:1100.00px;background:#e1e1e1;"></div>
<div class="a" style="left:2904.85px;top:615.00px;width:1.30px;height:1100.00px;background:#e1e1e1;"></div>
<div class="a" style="left:337.50px;top:917.25px;width:2567.00px;height:39.75px;background:#2d5f80;"></div>
<div class="a" style="left:337.50px;top:959.00px;width:2567.00px;height:84.00px;background:#c9e5f3;"></div>
<div class="a" style="left:337.50px;top:1131.50px;width:2567.00px;height:83.50px;background:#c9e5f3;"></div>
<div class="a" style="left:337.50px;top:1303.00px;width:2567.00px;height:40.00px;background:#c9e5f3;"></div>
<div class="a" style="left:337.50px;top:915.15px;width:2569.00px;height:2.20px;background:#5fabe0;"></div>
<div class="a" style="left:337.50px;top:956.90px;width:2569.00px;height:2.20px;background:#5fabe0;"></div>
<div class="a" style="left:337.50px;top:1042.90px;width:2569.00px;height:2.20px;background:#5fabe0;"></div>
<div class="a" style="left:337.50px;top:1129.40px;width:2569.00px;height:2.20px;background:#5fabe0;"></div>
<div class="a" style="left:337.50px;top:1214.90px;width:2569.00px;height:2.20px;background:#5fabe0;"></div>
<div class="a" style="left:337.50px;top:1300.90px;width:2569.00px;height:2.20px;background:#5fabe0;"></div>
<div class="a" style="left:337.50px;top:1342.90px;width:2569.00px;height:2.20px;background:#5fabe0;"></div>
<div class="a" style="left:2904.60px;top:915.15px;width:1.80px;height:429.95px;background:#5fabe0;"></div>
<div class="a" style="left:253.00px;top:651.75px;width:2700.00px;height:1.50px;background:#c6c6c6;"></div>
<div class="a" style="left:336.75px;top:615.00px;width:1.50px;height:1100.00px;background:#c6c6c6;"></div>
<span class="t" style="left:1223.10px;top:620px;font-size:28.00px;color:#5f5f5f;transform:scaleX(0.8582);">A</span>
<span class="t" style="left:2331.20px;top:620px;font-size:28.00px;color:#5f5f5f;transform:scaleX(0.9392);">B</span>
<span class="t" style="left:2720.59px;top:620px;font-size:28.00px;color:#5f5f5f;transform:scaleX(1.0045);">C</span>
<div class="a" style="left:2905.50px;top:615.00px;width:60.00px;height:35.00px;background:#d2e9db;"></div>
<div class="a" style="left:2902.00px;top:649.50px;width:60.00px;height:3.50px;background:#2e7d47;"></div>
<svg class="a" style="left:306.50px;top:621.00px;" width="24.00" height="24.00" viewBox="0 0 24 24"><path d="M23.5 0.4 L23.5 23.8 L0.1 23.8 Z" fill="#b7b7b7"/></svg>
<span class="t" style="left:313.44px;top:661px;font-size:27.20px;color:#616161;transform:scaleX(0.9700);">1</span>
<span class="t" style="left:313.44px;top:772px;font-size:27.20px;color:#616161;transform:scaleX(0.9700);">2</span>
<span class="t" style="left:313.18px;top:883px;font-size:27.20px;color:#616161;transform:scaleX(0.9700);">3</span>
<span class="t" style="left:312.92px;top:925px;font-size:27.20px;color:#616161;transform:scaleX(0.9700);">4</span>
<span class="t" style="left:313.18px;top:989px;font-size:27.20px;color:#616161;transform:scaleX(0.9700);">5</span>
<div class="a" style="left:253.00px;top:1044.50px;width:81.50px;height:85.50px;background:#d2e9db;"></div>
<div class="a" style="left:334.00px;top:1041.50px;width:4.00px;height:91.00px;background:#2e7d47;"></div>
<span class="t" style="left:313.18px;top:1075px;font-size:27.20px;color:#217346;transform:scaleX(0.9700);">6</span>
<span class="t" style="left:313.44px;top:1161px;font-size:27.20px;color:#616161;transform:scaleX(0.9700);">7</span>
<span class="t" style="left:313.18px;top:1247px;font-size:27.20px;color:#616161;transform:scaleX(0.9700);">8</span>
<span class="t" style="left:313.44px;top:1311px;font-size:27.20px;color:#616161;transform:scaleX(0.9700);">9</span>
<span class="t" style="left:298.41px;top:1353px;font-size:27.20px;color:#616161;transform:scaleX(0.9700);">10</span>
<span class="t" style="left:300.78px;top:1395px;font-size:27.20px;color:#616161;transform:scaleX(0.9700);">11</span>
<span class="t" style="left:298.67px;top:1437px;font-size:27.20px;color:#616161;transform:scaleX(0.9700);">12</span>
<span class="t" style="left:298.41px;top:1479px;font-size:27.20px;color:#616161;transform:scaleX(0.9700);">13</span>
<span class="t" style="left:298.14px;top:1521px;font-size:27.20px;color:#616161;transform:scaleX(0.9700);">14</span>
<span class="t" style="left:298.41px;top:1563px;font-size:27.20px;color:#616161;transform:scaleX(0.9700);">15</span>
<span class="t" style="left:298.41px;top:1605px;font-size:27.20px;color:#616161;transform:scaleX(0.9700);">16</span>
<span class="t" style="left:342.06px;top:658px;font-size:31.40px;color:#000000;font-weight:700;transform:scaleX(0.8579);">Summary</span>
<span class="t" style="left:340.93px;top:703px;font-size:28.80px;color:#000000;transform:scaleX(1.0056);">Both documents primarily serve the purpose of protecting confidential information but differ significantly in definitions, obligations, and</span>
<span class="t" style="left:342.10px;top:747px;font-size:28.80px;color:#000000;">detail regarding the management of that information.</span>
<span class="t" style="left:342.06px;top:922px;font-size:31.40px;color:#ffffff;font-weight:700;transform:scaleX(0.8579);">Summary</span>
<span class="t" style="left:2126.97px;top:922px;font-size:31.40px;color:#ffffff;font-weight:700;transform:scaleX(0.8515);">Aspect</span>
<span class="t" style="left:2559.35px;top:922px;font-size:31.40px;color:#ffffff;font-weight:700;transform:scaleX(0.8773);">Importance</span>
<span class="t" style="left:340.95px;top:967px;font-size:28.80px;color:#000000;">Document 1&#x27;s definition is broader as it allows for interpretation based on context, while Document 2 specifies that information must be</span>
<span class="t" style="left:342.10px;top:1010px;font-size:28.80px;color:#000000;transform:scaleX(0.9975);">designated as confidential or reasonably understood.</span>
<span class="t" style="left:340.94px;top:1053px;font-size:28.80px;color:#000000;">Document 1 allows for limited disclosure to employees bound by similar confidentiality measures, while Document 2 requires prior written</span>
<span class="t" style="left:342.10px;top:1096px;font-size:28.80px;color:#000000;transform:scaleX(0.9942);">consent for any third-party disclosures, adding a layer of protection.</span>
<span class="t" style="left:340.95px;top:1139px;font-size:28.80px;color:#000000;transform:scaleX(0.9967);">Document 1 emphasizes returning or destroying all confidential information upon request, whereas Document 2 differentiates this process</span>
<span class="t" style="left:342.11px;top:1182px;font-size:28.80px;color:#000000;transform:scaleX(0.9928);">as well but frames it as a specific obligation irrespective of request.</span>
<span class="t" style="left:340.97px;top:1225px;font-size:28.80px;color:#000000;transform:scaleX(0.9914);">Both documents specify a duration but the details may vary in practice based on the context of execution and operational impact of the terms</span>
<span class="t" style="left:342.06px;top:1268px;font-size:28.80px;color:#000000;transform:scaleX(1.0300);">defined.</span>
<div class="a" style="left:2124.5px;top:959px;width:428.0px;height:84px;overflow:hidden;"><div class="a" style="left:-2124.5px;top:-959px;">
<span class="t" style="left:2126.22px;top:967px;font-size:28.80px;color:#000000;transform:scaleX(0.9900);">Definition of Confidential Information</span>
</div></div>
<span class="t" style="left:2127.36px;top:1053px;font-size:28.80px;color:#000000;transform:scaleX(0.9886);">Obligations of Parties</span>
<span class="t" style="left:2126.18px;top:1139px;font-size:28.80px;color:#000000;transform:scaleX(1.0068);">Return of Information</span>
<span class="t" style="left:2127.93px;top:1225px;font-size:28.80px;color:#000000;transform:scaleX(0.9884);">Term and Termination</span>
<span class="t" style="left:2558.61px;top:967px;font-size:28.80px;color:#000000;transform:scaleX(1.0386);">Medium</span>
<span class="t" style="left:2558.65px;top:1053px;font-size:28.80px;color:#000000;transform:scaleX(1.0218);">High</span>
<span class="t" style="left:2558.61px;top:1139px;font-size:28.80px;color:#000000;transform:scaleX(1.0386);">Medium</span>
<span class="t" style="left:2558.73px;top:1225px;font-size:28.80px;color:#000000;transform:scaleX(0.9864);">Low</span>
<div class="a" style="left:2087.50px;top:922.50px;width:31.80px;height:32.20px;background:#ffffff;border:1px solid #b9aea8;border-radius:2px;"></div>
<svg class="a" style="left:2095.70px;top:933.80px;" width="15.40" height="9.60" viewBox="0 0 15.4 9.6"><path d="M1.5 1.5 L7.70 8.10 L13.90 1.5" fill="none" stroke="#707070" stroke-width="1.4" stroke-linecap="round" stroke-linejoin="round"/></svg>
<div class="a" style="left:2520.00px;top:922.50px;width:31.80px;height:32.20px;background:#ffffff;border:1px solid #b9aea8;border-radius:2px;"></div>
<svg class="a" style="left:2528.20px;top:933.80px;" width="15.40" height="9.60" viewBox="0 0 15.4 9.6"><path d="M1.5 1.5 L7.70 8.10 L13.90 1.5" fill="none" stroke="#707070" stroke-width="1.4" stroke-linecap="round" stroke-linejoin="round"/></svg>
<div class="a" style="left:2870.00px;top:922.50px;width:31.80px;height:32.20px;background:#ffffff;border:1px solid #b9aea8;border-radius:2px;"></div>
<svg class="a" style="left:2878.20px;top:933.80px;" width="15.40" height="9.60" viewBox="0 0 15.4 9.6"><path d="M1.5 1.5 L7.70 8.10 L13.90 1.5" fill="none" stroke="#707070" stroke-width="1.4" stroke-linecap="round" stroke-linejoin="round"/></svg>
<svg class="a" style="left:2894.00px;top:1332.50px;" width="11.50" height="11.50" viewBox="0 0 11.5 11.5"><path d="M11.5 0 V11.5 H0 V6 H6 V0 Z" fill="#1f3864"/></svg>
<div class="a" style="left:2902.30px;top:1040.80px;width:80.00px;height:92.40px;border:3.8px solid #3c7f4e;background:#ffffff;"></div>
<svg class="a" style="left:376.00px;top:190.00px;" width="42.00" height="38.00" viewBox="376.00 190.00 42.00 38.00"><clipPath id="xc"><rect x="387.1" y="191" width="29.9" height="36" rx="1.8"/></clipPath><g clip-path="url(#xc)"><rect x="387.1" y="191" width="15.2" height="9.05" fill="#4fa36e"/><rect x="402.2" y="191" width="14.9" height="9.05" fill="#64c38d"/><rect x="387.1" y="200" width="15.2" height="9.05" fill="#3f8f5d"/><rect x="402.2" y="200" width="14.9" height="9.05" fill="#4fa36f"/><rect x="387.1" y="209" width="15.2" height="9.05" fill="#377d4c"/><rect x="402.2" y="209" width="14.9" height="9.05" fill="#387f4d"/><rect x="387.1" y="218" width="15.2" height="9.05" fill="#2c6039"/><rect x="402.2" y="218" width="14.9" height="9.05" fill="#2c6039"/></g><rect x="378.3" y="198.2" width="24.6" height="23.6" rx="2" fill="rgba(0,0,0,0.22)"/><rect x="377.1" y="197.2" width="24.6" height="23.5" rx="2" fill="#397d4b"/><text x="389.3" y="216.3" font-family="Liberation Sans,sans-serif" font-weight="700" font-size="20.2" fill="#fff" text-anchor="middle" transform="translate(389.3 0) scale(0.93 1) translate(-389.3 0)">X</text></svg>
<svg class="a" style="left:714.00px;top:193.00px;" width="34.00" height="32.00" viewBox="714.00 193.00 34.00 32.00"><path d="M738.6 201.6 A8.1 8.1 0 0 0 723.6 203.6 C720.5 203.6 717.9 206.3 717.9 209.6 C717.9 213 720.5 215.6 723.6 215.6 L725.6 215.6" fill="none" stroke="#242424" stroke-width="2.1" stroke-linecap="round" stroke-linejoin="round" /><circle cx="736" cy="212.5" r="8.9" fill="#242424"/><path d="M731.6 212.8 L734.8 216 L740.8 209.4" fill="none" stroke="#f5f5f5" stroke-width="2.2" stroke-linecap="round" stroke-linejoin="round" /></svg>
<svg class="a" style="left:1273.00px;top:193.00px;" width="34.00" height="33.00" viewBox="1273.00 193.00 34.00 33.00"><path d="M1277.5 221.5 L1287.4 211.6" fill="none" stroke="#616161" stroke-width="2.2" stroke-linecap="round" stroke-linejoin="round" /><circle cx="1294" cy="205.8" r="8.6" fill="none" stroke="#616161" stroke-width="2.2"/></svg>
<svg class="a" style="left:2504.00px;top:274.00px;" width="34.00" height="32.00" viewBox="2504.00 274.00 34.00 32.00"><path d="M2511.5 278.2 H2530.5 Q2534 278.2 2534 281.7 V292.3 Q2534 295.8 2530.5 295.8 H2521.5 L2515.2 301.6 Q2513.7 302.6 2513.7 300.8 V295.8 H2511.5 Q2508 295.8 2508 292.3 V281.7 Q2508 278.2 2511.5 278.2 Z" fill="none" stroke="#242424" stroke-width="2.1" stroke-linecap="round" stroke-linejoin="round" /></svg>
<svg class="a" style="left:2711.00px;top:276.00px;" width="35.00" height="24.00" viewBox="2711.00 276.00 35.00 24.00"><circle cx="2716.4" cy="288.2" r="2.6" fill="#242424"/><circle cx="2739.5" cy="288.2" r="2.6" fill="#242424"/><path d="M2718.5 288.2 C2721.5 288.2 2722.0 282.0 2724.4 282.0 C2727.4 282.0 2728.4 294.6 2731.5 294.6 C2734.0 294.6 2734.6 288.2 2738 288.2" fill="none" stroke="#242424" stroke-width="2.0" stroke-linecap="round" stroke-linejoin="round" /></svg>
<svg class="a" style="left:2897.00px;top:273.00px;" width="34.00" height="34.00" viewBox="2897.00 273.00 34.00 34.00"><path d="M2902.6 301.3 L2904.6 293.6 L2920.2 278 Q2922.4 276.2 2924.7 278.2 L2925.8 279.3 Q2927.8 281.6 2925.8 283.8 L2910.3 299.3 Z M2917.2 281 L2923 286.8" fill="none" stroke="#242424" stroke-width="2.0" stroke-linecap="round" stroke-linejoin="round" /></svg>
<svg class="a" style="left:300.00px;top:367.00px;" width="28.00" height="29.00" viewBox="300.00 367.00 28.00 29.00"><path d="M303.6 370 V380.1 H313.6 M303.6 380.1 L311 372.7 A7.6 7.6 0 0 1 321.8 383.4 L312.1 393" fill="none" stroke="#2b2b2b" stroke-width="2.2" stroke-linecap="round" stroke-linejoin="round" /></svg>
<svg class="a" style="left:298.00px;top:425.00px;" width="28.00" height="30.00" viewBox="298.00 425.00 28.00 30.00"><path d="M322.9 428.5 V439.8 H311.6 M322.9 439.8 L314.2 431.1 A7.6 7.6 0 0 0 303.4 441.8 L314.7 451.5" fill="none" stroke="#b4b4b4" stroke-width="2.2" stroke-linecap="round" stroke-linejoin="round" /></svg>
<svg class="a" style="left:394.00px;top:349.00px;" width="43.00" height="48.00" viewBox="394.00 349.00 43.00 48.00"><path d="M403 355.4 H423.5 Q428.8 355.4 428.8 360.7 V392 H403 Q398.3 392 398.3 387.3 V360.2 Q398.3 355.4 403 355.4 Z" fill="#f4dd98" stroke="#d9732b" stroke-width="2.2"/><rect x="406.3" y="353.6" width="13.6" height="6.6" rx="3.3" fill="#fff" stroke="#d9732b" stroke-width="2.2"/><rect x="408.6" y="362.4" width="27" height="33" rx="5" fill="#fff"/><rect x="411.9" y="365.8" width="20" height="26" rx="4" fill="#fff" stroke="#2b2b2b" stroke-width="2.2"/></svg>
<svg class="a" style="left:476.00px;top:345.00px;" width="30.00" height="34.00" viewBox="476.00 345.00 30.00 34.00"><path d="M483.8 349 L495.3 366.6 M497.9 349 L492.6 357 M490 361 L486.6 366.2" fill="none" stroke="#2b2b2b" stroke-width="2.0" stroke-linecap="round" stroke-linejoin="round" /><circle cx="484.1" cy="371" r="3.8" fill="none" stroke="#3b87d0" stroke-width="2.2"/><circle cx="498" cy="371" r="3.8" fill="none" stroke="#3b87d0" stroke-width="2.2"/></svg>
<svg class="a" style="left:476.00px;top:397.00px;" width="29.00" height="34.00" viewBox="476.00 397.00 29.00 34.00"><rect x="484.6" y="401.6" width="15.4" height="21.2" rx="3.6" fill="none" stroke="#2b2b2b" stroke-width="2.2"/><path d="M480.3 405.6 V421.4 Q480.3 427.3 486.2 427.3 H495.8" fill="none" stroke="#2b2b2b" stroke-width="2.2" stroke-linecap="round" stroke-linejoin="round" /></svg>
<svg class="a" style="left:478.00px;top:449.00px;" width="26.00" height="34.00" viewBox="478.00 449.00 26.00 34.00"><rect x="482.2" y="453.3" width="17.7" height="12.2" rx="1" fill="#f4dd98" stroke="#d9732b" stroke-width="2.2"/><path d="M492.2 453.5 V457.5 M496.2 453.5 V459.5" fill="none" stroke="#d9732b" stroke-width="1.8" stroke-linecap="round" stroke-linejoin="round" /><path d="M482.2 466.2 V468 Q482.2 470.8 485 470.8 H488.2 V476 Q488.2 479 491.1 479 Q494 479 494 476 V470.8 H497.2 Q499.9 470.8 499.9 468 V466.2" fill="none" stroke="#2b2b2b" stroke-width="2.2" stroke-linecap="round" stroke-linejoin="round" /></svg>
<span class="t" style="left:571.53px;top:424px;font-size:34.40px;color:#333;font-weight:700;transform:scaleX(0.7596);">B</span>
<span class="t" style="left:632.40px;top:425px;font-size:30.60px;color:#333;font-style:italic;transform:scaleX(1.0893);font-weight:400;">I</span>
<div class="a" style="left:634.20px;top:428.10px;width:13.40px;height:2.00px;background:#333;"></div>
<div class="a" style="left:626.40px;top:449.90px;width:13.40px;height:2.00px;background:#333;"></div>
<span class="t" style="left:683.32px;top:425px;font-size:26.20px;color:#333;transform:scaleX(1.0266);">U</span>
<div class="a" style="left:683.30px;top:449.90px;width:19.20px;height:2.10px;background:#333;"></div>
<span class="t" style="left:738.89px;top:424px;font-size:27.00px;color:#333;transform:scaleX(0.9753);">D</span>
<div class="a" style="left:737.60px;top:447.90px;width:23.00px;height:2.00px;background:#333;"></div>
<div class="a" style="left:737.60px;top:452.20px;width:23.00px;height:2.00px;background:#333;"></div>
<span class="t" style="left:790.14px;top:431px;font-size:25.50px;color:#333;transform:scaleX(1.0407);">ab</span>
<div class="a" style="left:789.20px;top:444.30px;width:31.60px;height:2.00px;background:#333;"></div>
<svg class="a" style="left:846.00px;top:425.00px;" width="28.00" height="28.00" viewBox="846.00 425.00 28.00 28.00"><path d="M847.4 427.1 H873.4" stroke="#555" stroke-width="1.7" stroke-dasharray="1.7 2.35" fill="none"/><path d="M847.4 439.0 H873.4" stroke="#555" stroke-width="1.7" stroke-dasharray="1.7 2.35" fill="none"/><path d="M848.2 426.3 V448" stroke="#555" stroke-width="1.7" stroke-dasharray="1.7 2.35" fill="none"/><path d="M860.3 426.3 V448" stroke="#555" stroke-width="1.7" stroke-dasharray="1.7 2.35" fill="none"/><path d="M872.4 426.3 V448" stroke="#555" stroke-width="1.7" stroke-dasharray="1.7 2.35" fill="none"/><path d="M847.3 451.1 H872.9" stroke="#333" stroke-width="2.2" fill="none"/></svg>
<svg class="a" style="left:889.40px;top:435.30px;" width="13.50" height="8.90" viewBox="0 0 13.5 8.9"><path d="M1.5 1.5 L6.75 7.40 L12.00 1.5" fill="none" stroke="#242424" stroke-width="2.0" stroke-linecap="round" stroke-linejoin="round"/></svg>
<svg class="a" style="left:921.00px;top:421.00px;" width="31.00" height="36.00" viewBox="921.00 421.00 31.00 36.00"><rect x="925" y="444.3" width="23.9" height="9.6" rx="2.5" fill="#ffff4f"/><path d="M933.3 426.9 L942.1 435.7 L933.6 444 L924.6 435 Z" fill="#fff" stroke="#333" stroke-width="2.1" stroke-linecap="round" stroke-linejoin="round" /><path d="M934 424.4 V431" fill="none" stroke="#333" stroke-width="2.0" stroke-linecap="round" stroke-linejoin="round" /><path d="M944.6 437.3 Q948 441.6 948 443.4 A3.4 3.4 0 0 1 941.2 443.4 Q941.2 441.6 944.6 437.3 Z" fill="#fff" stroke="#333" stroke-width="1.9" stroke-linecap="round" stroke-linejoin="round" /></svg>
<svg class="a" style="left:965.50px;top:435.30px;" width="13.50" height="8.90" viewBox="0 0 13.5 8.9"><path d="M1.5 1.5 L6.75 7.40 L12.00 1.5" fill="none" stroke="#242424" stroke-width="2.0" stroke-linecap="round" stroke-linejoin="round"/></svg>
<div class="a" style="left:1000.90px;top:444.30px;width:24.00px;height:9.60px;background:#e83123;border-radius:2.5px;"></div>
<span class="t" style="left:1006.00px;top:424px;font-size:21.60px;color:#333;transform:scaleX(0.9674);">A</span>
<svg class="a" style="left:1041.30px;top:435.30px;" width="13.70" height="8.90" viewBox="0 0 13.7 8.9"><path d="M1.5 1.5 L6.85 7.40 L12.20 1.5" fill="none" stroke="#242424" stroke-width="2.0" stroke-linecap="round" stroke-linejoin="round"/></svg>
<span class="t" style="left:928.90px;top:368px;font-size:33.90px;color:#333;transform:scaleX(0.8013);">A</span>
<svg class="a" style="left:942.30px;top:364.30px;" width="17.80" height="15.40" viewBox="942.30 364.30 17.80 15.40"><path d="M946.3 375.7 L951.2 368.3 L956.1 375.7" fill="none" stroke="#3b87d0" stroke-width="2.3" stroke-linecap="round" stroke-linejoin="round" /></svg>
<span class="t" style="left:985.20px;top:375px;font-size:25.40px;color:#333;transform:scaleX(0.8109);">A</span>
<svg class="a" style="left:998.20px;top:364.30px;" width="17.80" height="15.40" viewBox="998.20 364.30 17.80 15.40"><path d="M1002.2 368.3 L1007.1 375.7 L1012 368.3" fill="none" stroke="#3b87d0" stroke-width="2.3" stroke-linecap="round" stroke-linejoin="round" /></svg>
<svg class="a" style="left:1037.50px;top:495.75px;" width="22.50" height="22.50" viewBox="1037.50 495.75 22.50 22.50"><path d="M1041.5 508.75 V499.75 H1050.5 M1047.0 505.25 L1056.0 514.25 M1049.5 514.25 H1056.0 V507.75" fill="none" stroke="#333" stroke-width="1.9" stroke-linecap="round" stroke-linejoin="round" /></svg>
<svg class="a" style="left:1534.00px;top:495.75px;" width="22.50" height="22.50" viewBox="1534.00 495.75 22.50 22.50"><path d="M1538 508.75 V499.75 H1547 M1543.5 505.25 L1552.5 514.25 M1546 514.25 H1552.5 V507.75" fill="none" stroke="#333" stroke-width="1.9" stroke-linecap="round" stroke-linejoin="round" /></svg>
<svg class="a" style="left:1868.00px;top:495.75px;" width="22.50" height="22.50" viewBox="1868.00 495.75 22.50 22.50"><path d="M1872 508.75 V499.75 H1881 M1877.5 505.25 L1886.5 514.25 M1880 514.25 H1886.5 V507.75" fill="none" stroke="#333" stroke-width="1.9" stroke-linecap="round" stroke-linejoin="round" /></svg>
<svg class="a" style="left:1108.30px;top:347.20px;" width="29.40" height="29.40" viewBox="1108.30 347.20 29.40 29.40"><rect x="1110.3999999999999" y="349.3" width="25.2" height="25.2" rx="5" fill="none" stroke="#2b2b2b" stroke-width="2.2"/><path d="M1115.7 353.3 H1130.7" stroke="#3b87d0" stroke-width="2.0" fill="none"/><path d="M1117.6 357.1 H1128.6" stroke="#3b87d0" stroke-width="2.0" fill="none"/></svg>
<svg class="a" style="left:1164.20px;top:347.20px;" width="29.40" height="29.40" viewBox="1164.20 347.20 29.40 29.40"><rect x="1166.3" y="349.3" width="25.2" height="25.2" rx="5" fill="none" stroke="#2b2b2b" stroke-width="2.2"/><path d="M1171.6 359.1 H1186.6" stroke="#3b87d0" stroke-width="2.0" fill="none"/><path d="M1173.6 363 H1184.5" stroke="#3b87d0" stroke-width="2.0" fill="none"/></svg>
<svg class="a" style="left:1206.30px;top:336.30px;" width="57.50" height="49.40" viewBox="1206.30 336.30 57.50 49.40"><rect x="1208.3" y="338.3" width="53.5" height="45.4" rx="7" fill="#ebebeb" stroke="#5c5c5c" stroke-width="2"/><rect x="1222.3" y="349.3" width="25.2" height="25.2" rx="5" fill="none" stroke="#2b2b2b" stroke-width="2.2"/><path d="M1227.7 367.1 H1242.7" stroke="#3b87d0" stroke-width="2.0" fill="none"/><path d="M1229.5 371 H1240.7" stroke="#3b87d0" stroke-width="2.0" fill="none"/></svg>
<svg class="a" style="left:1109.50px;top:400.50px;" width="27.00" height="25.00" viewBox="1109.50 400.50 27.00 25.00"><path d="M1111.3 403 H1127.9" stroke="#2b2b2b" stroke-width="2.2" stroke-linecap="butt" fill="none"/><path d="M1111.3 412.9 H1134.8" stroke="#2b2b2b" stroke-width="2.2" stroke-linecap="butt" fill="none"/><path d="M1111.3 423 H1123.1" stroke="#2b2b2b" stroke-width="2.2" stroke-linecap="butt" fill="none"/></svg>
<svg class="a" style="left:1165.50px;top:400.50px;" width="27.00" height="25.00" viewBox="1165.50 400.50 27.00 25.00"><path d="M1171.4 403 H1186.6" stroke="#2b2b2b" stroke-width="2.2" stroke-linecap="butt" fill="none"/><path d="M1167.4 412.9 H1190.7" stroke="#2b2b2b" stroke-width="2.2" stroke-linecap="butt" fill="none"/><path d="M1173.4 423 H1184.8" stroke="#2b2b2b" stroke-width="2.2" stroke-linecap="butt" fill="none"/></svg>
<svg class="a" style="left:1221.50px;top:400.50px;" width="27.00" height="25.00" viewBox="1221.50 400.50 27.00 25.00"><path d="M1231.6 403 H1246.6" stroke="#2b2b2b" stroke-width="2.2" stroke-linecap="butt" fill="none"/><path d="M1223.3 412.9 H1246.6" stroke="#2b2b2b" stroke-width="2.2" stroke-linecap="butt" fill="none"/><path d="M1237.3 423 H1246.6" stroke="#2b2b2b" stroke-width="2.2" stroke-linecap="butt" fill="none"/></svg>
<svg class="a" style="left:1107.50px;top:452.50px;" width="31.00" height="25.00" viewBox="1107.50 452.50 31.00 25.00"><path d="M1109.5 455 H1124.7" stroke="#2b2b2b" stroke-width="2.2" stroke-linecap="butt" fill="none"/><path d="M1109.5 465 H1120.3" stroke="#2b2b2b" stroke-width="2.2" stroke-linecap="butt" fill="none"/><path d="M1109.5 475.2 H1126.6" stroke="#2b2b2b" stroke-width="2.2" stroke-linecap="butt" fill="none"/><path d="M1136.4 458.8 L1128.8 465 L1136.4 471.2" fill="none" stroke="#3b87d0" stroke-width="2.2" stroke-linecap="round" stroke-linejoin="round" /></svg>
<svg class="a" style="left:1163.50px;top:452.50px;" width="31.00" height="25.00" viewBox="1163.50 452.50 31.00 25.00"><path d="M1177.6 455 H1192.6" stroke="#2b2b2b" stroke-width="2.2" stroke-linecap="butt" fill="none"/><path d="M1181.7 465 H1192.6" stroke="#2b2b2b" stroke-width="2.2" stroke-linecap="butt" fill="none"/><path d="M1175.7 475.2 H1192.6" stroke="#2b2b2b" stroke-width="2.2" stroke-linecap="butt" fill="none"/><path d="M1165.8 458.8 L1173.6 465 L1165.8 471.2" fill="none" stroke="#3b87d0" stroke-width="2.2" stroke-linecap="round" stroke-linejoin="round" /></svg>
<svg class="a" style="left:1219.00px;top:450.00px;" width="32.00" height="34.00" viewBox="1219.00 450.00 32.00 34.00"><path d="M1229.8 475.2 L1246.2 458.7 M1239.5 458.5 H1246.4 V465.4 M1229.8 475.2 H1246.4 M1241.6 470.4 L1246.4 475.2 L1241.6 480" fill="none" stroke="#3b87d0" stroke-width="2.1" stroke-linecap="round" stroke-linejoin="round" /><path d="M1223.6 454.4 L1228.2 465.4 M1223.6 454.4 L1234.4 459 M1225.7 460.6 L1230.6 457.6" fill="none" stroke="#333" stroke-width="1.8" stroke-linecap="round" stroke-linejoin="round" /></svg>
<svg class="a" style="left:1263.20px;top:461.80px;" width="13.50" height="8.60" viewBox="0 0 13.5 8.6"><path d="M1.5 1.5 L6.75 7.10 L12.00 1.5" fill="none" stroke="#242424" stroke-width="2.0" stroke-linecap="round" stroke-linejoin="round"/></svg>
<svg class="a" style="left:1315.50px;top:369.00px;" width="27.50" height="25.50" viewBox="1315.50 369.00 27.50 25.50"><path d="M1317.4 371.9 H1340.7" stroke="#2b2b2b" stroke-width="2.2" stroke-linecap="butt" fill="none"/><path d="M1317.4 388.2 H1324.2" stroke="#2b2b2b" stroke-width="2.2" stroke-linecap="butt" fill="none"/><path d="M1317.4 380 H1336.6 A4.15 4.15 0 0 1 1336.6 388.3 H1328.2 M1332.2 384.2 L1328 388.3 L1332.2 392.4" fill="none" stroke="#3b87d0" stroke-width="2.1" stroke-linecap="round" stroke-linejoin="round" stroke-linecap="butt"/></svg>
<svg class="a" style="left:1314.40px;top:425.60px;" width="29.40" height="27.10" viewBox="1314.40 425.60 29.40 27.10"><rect x="1316.5" y="427.7" width="25.2" height="22.9" rx="4.5" fill="none" stroke="#2b2b2b" stroke-width="2.2"/><rect x="1316.5" y="431.8" width="25.2" height="15" fill="#fff" stroke="#3b87d0" stroke-width="2.2"/><path d="M1320.4 439.3 H1337.8 M1324.4 435.2 L1320.3 439.3 L1324.4 443.4 M1333.8 435.2 L1337.9 439.3 L1333.8 443.4" fill="none" stroke="#3b87d0" stroke-width="2.0" stroke-linecap="round" stroke-linejoin="round" /></svg>
<span class="t" style="left:1682.01px;top:425px;font-size:32.60px;color:#333;transform:scaleX(0.9055);">%</span>
<svg class="a" style="left:1741.00px;top:427.00px;" width="20.00" height="27.00" viewBox="1741.00 427.00 20.00 27.00"><circle cx="1751" cy="436.3" r="6.2" fill="#333"/><path d="M1756.2 437 C1756.6 444.5 1752 449 1745.6 449.4" fill="none" stroke="#333" stroke-width="2.0" stroke-linecap="round" stroke-linejoin="round" /></svg>
<svg class="a" style="left:1794.00px;top:427.00px;" width="30.90" height="31.00" viewBox="1794.00 427.00 30.90 31.00"><circle cx="1797" cy="440.2" r="1.6" fill="#333"/><rect x="1802.1" y="429.7" width="6.0" height="11" rx="3" fill="none" stroke="#333" stroke-width="1.9"/><circle cx="1813.9" cy="447" r="10.2" fill="#fff"/><circle cx="1813.9" cy="447" r="9.1" fill="#3f8ad2"/><path d="M1818.5 447 H1809.5 M1813.1000000000001 443 L1809.1000000000001 447 L1813.1000000000001 451" fill="none" stroke="#fff" stroke-width="1.9" stroke-linecap="round" stroke-linejoin="round" /></svg>
<svg class="a" style="left:1850.30px;top:427.00px;" width="30.80" height="31.00" viewBox="1850.30 427.00 30.80 31.00"><circle cx="1853.3" cy="440.2" r="1.6" fill="#333"/><rect x="1858.4" y="429.7" width="6.0" height="11" rx="3" fill="none" stroke="#333" stroke-width="1.9"/><rect x="1867.8" y="429.7" width="6.0" height="11" rx="3" fill="none" stroke="#333" stroke-width="1.9"/><circle cx="1870.1" cy="447" r="10.2" fill="#fff"/><circle cx="1870.1" cy="447" r="9.1" fill="#3f8ad2"/><path d="M1865.5 447 H1874.5 M1870.8999999999999 443 L1874.8999999999999 447 L1870.8999999999999 451" fill="none" stroke="#fff" stroke-width="1.9" stroke-linecap="round" stroke-linejoin="round" /></svg>
<svg class="a" style="left:1978.30px;top:357.00px;" width="37.80" height="37.70" viewBox="1978.30 357.00 37.80 37.70"><path d="M2005.1 359.1 H2009 Q2014 359.1 2014 364.1 V387.6 Q2014 392.6 2009 392.6 H2005.1 M2005.1 369.1 H2014 M2005.1 382.5 H2014" fill="none" stroke="#2b2b2b" stroke-width="2.1"/><rect x="1980.4" y="369.1" width="9.9" height="13.4" fill="#dce9f8" stroke="#2160b8" stroke-width="2.1"/><path d="M1985.4 359.1 H2005.1 V369.1 H1980.4 V364.1 Q1980.4 359.1 1985.4 359.1 Z" fill="#f19a9e" stroke="#c7321f" stroke-width="2.1"/><path d="M1980.4 382.5 H2005.1 V392.6 H1985.4 Q1980.4 392.6 1980.4 387.6 Z" fill="#f19a9e" stroke="#c7321f" stroke-width="2.1"/></svg>
<svg class="a" style="left:2108.00px;top:357.00px;" width="41.00" height="41.00" viewBox="2108.00 357.00 41.00 41.00"><path d="M2110.3 369.7 V387.6 Q2110.3 392.6 2115.3 392.6 H2124 M2119.8 369.7 V392.6 M2110.3 380.7 H2129.5 Q2133.9 380.7 2133.9 376.3 V369.7" fill="none" stroke="#2b2b2b" stroke-width="2.1"/><path d="M2115.3 359.1 H2138.6 Q2143.6 359.1 2143.6 364.1 V369.7 H2110.3 V364.1 Q2110.3 359.1 2115.3 359.1 Z" fill="#dce9f8" stroke="#2160b8" stroke-width="2.1"/><g fill="#fff" stroke="#fff" stroke-width="3.2" stroke-linejoin="round"><path d="M2144.74 372.26 L2132.45 384.05 L2136.75 387.95 L2147.26 374.54 Z"/><circle cx="2146.00" cy="373.40" r="1.7"/><circle cx="2131.78" cy="389.11" r="4.3"/><path d="M2128.91 386.52 Q2128.43 392.82 2129.68 395.31 L2129.53 392.88 Z"/></g><g fill="#4e9e52"><path d="M2144.74 372.26 L2132.45 384.05 L2136.75 387.95 L2147.26 374.54 Z"/><circle cx="2146.00" cy="373.40" r="1.7"/><circle cx="2131.78" cy="389.11" r="4.3"/><path d="M2128.91 386.52 Q2128.43 392.82 2129.68 395.31 L2129.53 392.88 Z"/></g></svg>
<svg class="a" style="left:2208.00px;top:355.00px;" width="43.00" height="43.00" viewBox="2208.00 355.00 43.00 43.00"><path d="M2217.9 356.6 V395.4 M2240 356.6 V376 M2209.5 367 H2248.4 M2209.5 385.1 H2228" fill="none" stroke="#2b2b2b" stroke-width="2.1"/><rect x="2217.9" y="367" width="22.1" height="18.1" fill="#dce9f8" stroke="#2160b8" stroke-width="2.1"/><g fill="#fff" stroke="#fff" stroke-width="3.2" stroke-linejoin="round"><path d="M2246.94 372.46 L2234.65 384.25 L2238.95 388.15 L2249.46 374.74 Z"/><circle cx="2248.20" cy="373.60" r="1.7"/><circle cx="2233.98" cy="389.31" r="4.3"/><path d="M2231.11 386.72 Q2230.63 393.02 2231.88 395.51 L2231.73 393.08 Z"/></g><g fill="#4e9e52"><path d="M2246.94 372.46 L2234.65 384.25 L2238.95 388.15 L2249.46 374.74 Z"/><circle cx="2248.20" cy="373.60" r="1.7"/><circle cx="2233.98" cy="389.31" r="4.3"/><path d="M2231.11 386.72 Q2230.63 393.02 2231.88 395.51 L2231.73 393.08 Z"/></g></svg>
<svg class="a" style="left:2323.00px;top:355.00px;" width="46.00" height="45.00" viewBox="2323.00 355.00 46.00 45.00"><path d="M2340.3 369.4 H2333.4 Q2328.4 369.4 2328.4 374.4 V389.4 Q2328.4 394.4 2333.4 394.4 H2348.6 Q2353.6 394.4 2353.6 389.4 V383" fill="none" stroke="#2b2b2b" stroke-width="2.1"/><rect x="2340.3" y="357.5" width="13.3" height="12.9" rx="3.6" fill="#dce9f8" stroke="#2160b8" stroke-width="2.1"/><rect x="2353.6" y="369.4" width="12.2" height="13.4" rx="3.6" fill="#dce9f8" stroke="#2160b8" stroke-width="2.1"/><rect x="2340.3" y="369.4" width="13.3" height="13.4" fill="#dce9f8" stroke="#2160b8" stroke-width="2.1"/><circle cx="2336" cy="386.9" r="12.3" fill="#fff"/><circle cx="2336" cy="386.9" r="10.9" fill="#4f9e54"/><path d="M2329.4 386.9 H2342.6 M2336 380.3 V393.5" fill="none" stroke="#fff" stroke-width="2.2" stroke-linecap="round" stroke-linejoin="round" /></svg>
<svg class="a" style="left:2405.00px;top:355.00px;" width="47.00" height="45.00" viewBox="2405.00 355.00 47.00 45.00"><path d="M2433.7 369.4 H2440.6 Q2445.6 369.4 2445.6 374.4 V389.4 Q2445.6 394.4 2440.6 394.4 H2425.4 Q2420.4 394.4 2420.4 389.4 V383" fill="none" stroke="#2b2b2b" stroke-width="2.1"/><rect x="2420.4" y="357.5" width="13.3" height="12.9" rx="3.6" fill="#dce9f8" stroke="#2160b8" stroke-width="2.1"/><rect x="2408.3" y="369.4" width="12.1" height="13.4" rx="3.6" fill="#dce9f8" stroke="#2160b8" stroke-width="2.1"/><rect x="2420.4" y="369.4" width="13.3" height="13.4" fill="#dce9f8" stroke="#2160b8" stroke-width="2.1"/><circle cx="2438.1" cy="386.9" r="12.3" fill="#fff"/><circle cx="2438.1" cy="386.9" r="10.9" fill="#d9453f"/><path d="M2433.5 382.3 L2442.7 391.5 M2442.7 382.3 L2433.5 391.5" fill="none" stroke="#fff" stroke-width="2.2" stroke-linecap="round" stroke-linejoin="round" /></svg>
<svg class="a" style="left:2487.00px;top:355.00px;" width="45.00" height="44.00" viewBox="2487.00 355.00 45.00 44.00"><path d="M2515.7 369.4 H2522.6 Q2527.6 369.4 2527.6 374.4 V380 M2502.4 383 V389.4 Q2502.4 394.4 2507.4 394.4 H2510" fill="none" stroke="#2b2b2b" stroke-width="2.1"/><rect x="2502.4" y="357.5" width="13.3" height="12.9" rx="3.6" fill="#dce9f8" stroke="#2160b8" stroke-width="2.1"/><rect x="2490.3" y="369.4" width="12.1" height="13.4" rx="3.6" fill="#dce9f8" stroke="#2160b8" stroke-width="2.1"/><rect x="2502.4" y="369.4" width="13.3" height="13.4" fill="#dce9f8" stroke="#2160b8" stroke-width="2.1"/><g fill="#fff" stroke="#fff" stroke-width="3.2" stroke-linejoin="round"><path d="M2526.92 372.48 L2514.01 385.50 L2518.39 389.30 L2529.48 374.72 Z"/><circle cx="2528.20" cy="373.60" r="1.7"/><circle cx="2513.44" cy="390.57" r="4.3"/><path d="M2510.52 388.03 Q2510.16 394.34 2511.47 396.80 L2511.27 394.38 Z"/></g><g fill="#4e9e52"><path d="M2526.92 372.48 L2514.01 385.50 L2518.39 389.30 L2529.48 374.72 Z"/><circle cx="2528.20" cy="373.60" r="1.7"/><circle cx="2513.44" cy="390.57" r="4.3"/><path d="M2510.52 388.03 Q2510.16 394.34 2511.47 396.80 L2511.27 394.38 Z"/></g></svg>
<span class="t" style="left:2598.59px;top:348px;font-size:33.00px;color:#333;transform:scaleX(1.2178);">Σ</span>
<svg class="a" style="left:2599.00px;top:403.50px;" width="27.00" height="26.50" viewBox="2599.00 403.50 27.00 26.50"><path d="M2608.6 427.6 H2619.4" fill="none" stroke="#9a3aaa" stroke-width="2.0" stroke-linecap="round" stroke-linejoin="round" /><path d="M2615.9 405.8 L2623.6 413.5 Q2624.8 414.8 2623.6 416.1 L2612.2 427.5 H2607.4 L2602.2 422.2 Q2601 420.9 2602.2 419.6 L2613.3 405.8 Q2614.6 404.6 2615.9 405.8 Z" fill="#fff" stroke="#333" stroke-width="2" stroke-linejoin="round"/><path d="M2606.6 414.6 L2615.2 423.9 L2611.8 427.4 H2607.4 L2602.2 422.2 Q2601 420.9 2602.2 419.6 Z" fill="#caa0d8" stroke="#9a3aaa" stroke-width="2" stroke-linejoin="round"/></svg>
<span class="t" style="left:2795.20px;top:354px;font-size:24.00px;color:#3b87d0;transform:scaleX(0.8458);">A</span>
<span class="t" style="left:2794.66px;top:376px;font-size:24.40px;color:#333;transform:scaleX(1.0134);">Z</span>
<svg class="a" style="left:2802.00px;top:355.00px;" width="35.00" height="43.00" viewBox="2802.00 355.00 35.00 43.00"><path d="M2805.6 357 H2834.6 V366.7 L2820.3 380.8 V395.3 L2814.9 392.6 V380.8 L2809.6 376.2" fill="none" stroke="#333" stroke-width="2.0" stroke-linecap="round" stroke-linejoin="round" stroke-linejoin="miter"/></svg>
<svg class="a" style="left:2879.00px;top:355.00px;" width="43.00" height="43.00" viewBox="2879.00 355.00 43.00 43.00"><circle cx="2895.7" cy="373.8" r="12.6" fill="none" stroke="#333" stroke-width="2.0"/><path d="M2904.8 382.9 L2917.4 393.4" fill="none" stroke="#333" stroke-width="2.0" stroke-linecap="round" stroke-linejoin="round" /></svg>
<svg class="a" style="left:539.40px;top:546.40px;" width="29.40" height="29.30" viewBox="539.40 546.40 29.40 29.30"><path d="M543.2 550.2 L565 571.9 M565 550.2 L543.2 571.9" fill="none" stroke="#b0b0b0" stroke-width="1.8" stroke-linecap="round" stroke-linejoin="round" /></svg>
<svg class="a" style="left:593.00px;top:546.00px;" width="38.00" height="29.00" viewBox="593.00 546.00 38.00 29.00"><path d="M597.2 560.4 L607 569.8 L626.9 550.3" fill="none" stroke="#b0b0b0" stroke-width="1.8" stroke-linecap="round" stroke-linejoin="round" /></svg>
<span class="t" style="left:660.5px;top:548px;font-size:21.5px;color:#333;font-family:'DejaVu Serif','Liberation Serif',serif;font-style:italic;">f</span>
<span class="t" style="left:670.4px;top:556px;font-size:18.6px;color:#333;font-style:italic;transform:scaleX(1.06);">x</span>
</div></div>
</body></html>
